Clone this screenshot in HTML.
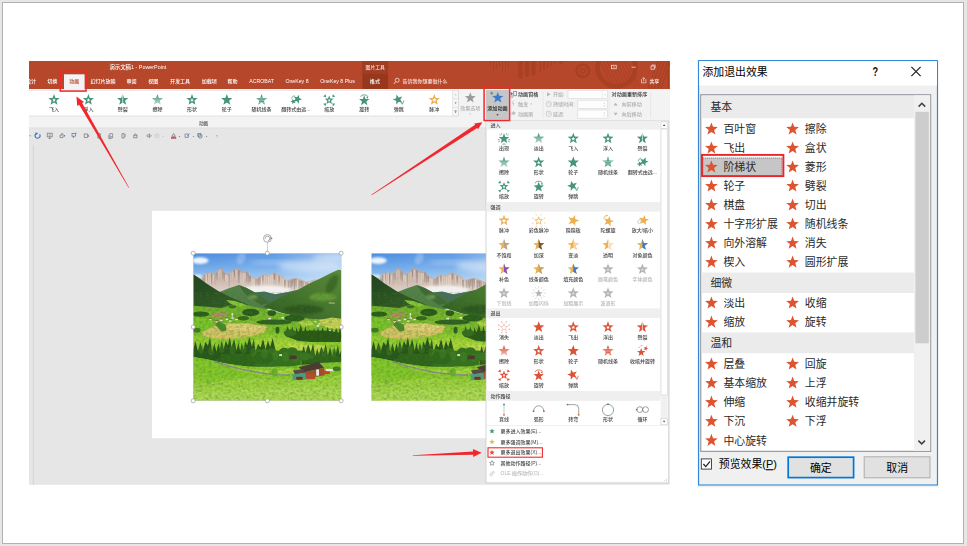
<!DOCTYPE html>
<html lang="zh-CN">
<head>
<meta charset="utf-8">
<title>添加退出效果</title>
<style>
html,body{margin:0;padding:0;background:#e6e6e6;}
body{width:967px;height:546px;overflow:hidden;font-family:"Liberation Sans","Noto Sans CJK SC",sans-serif;}
svg{display:block;}
</style>
</head>
<body>
<svg width="967" height="546" viewBox="0 0 967 546" font-family='"Liberation Sans","Noto Sans CJK SC",sans-serif'>
<defs>
<clipPath id="cwin"><rect x="29.0" y="61.0" width="640.6" height="423.8"/></clipPath>
<clipPath id="cph"><rect x="12" y="12" width="520" height="518"/></clipPath>
<linearGradient id="gsky" x1="0" y1="0" x2="0" y2="1"><stop offset="0" stop-color="#4a8ce0"/><stop offset="0.25" stop-color="#6ea8e8"/><stop offset="0.5" stop-color="#a2caf0"/><stop offset="0.75" stop-color="#cbe0f4"/><stop offset="1" stop-color="#e0ebf3"/></linearGradient>
<linearGradient id="gskyr" x1="0" y1="0" x2="1" y2="0"><stop offset="0" stop-color="#fff" stop-opacity="0"/><stop offset="0.55" stop-color="#fff" stop-opacity="0.12"/><stop offset="1" stop-color="#fff" stop-opacity="0.5"/></linearGradient>
<linearGradient id="gfore" x1="0" y1="0" x2="0" y2="1"><stop offset="0" stop-color="#79c226"/><stop offset="0.5" stop-color="#8fcb30"/><stop offset="1" stop-color="#a9d64a"/></linearGradient>
<linearGradient id="gmid" x1="0" y1="0" x2="0" y2="1"><stop offset="0" stop-color="#6fae2c"/><stop offset="0.5" stop-color="#86c62e"/><stop offset="1" stop-color="#9ad032"/></linearGradient>
<linearGradient id="glh" x1="0" y1="0" x2="1" y2="1"><stop offset="0" stop-color="#23461e"/><stop offset="1" stop-color="#355f2a"/></linearGradient>
<linearGradient id="grh" x1="1" y1="0" x2="0" y2="1"><stop offset="0" stop-color="#5a8a3a"/><stop offset="0.5" stop-color="#45752e"/><stop offset="1" stop-color="#2e5822"/></linearGradient>
<linearGradient id="grock" x1="0" y1="0" x2="0" y2="1"><stop offset="0" stop-color="#b49e95"/><stop offset="0.5" stop-color="#cfbcb0"/><stop offset="0.8" stop-color="#ddd0ca"/><stop offset="1" stop-color="#ebe6e4"/></linearGradient>
<filter id="b1" x="-20%" y="-20%" width="140%" height="140%"><feGaussianBlur stdDeviation="1.2"/></filter>
<filter id="b3" x="-30%" y="-30%" width="160%" height="160%"><feGaussianBlur stdDeviation="4"/></filter>
<filter id="b8" x="-30%" y="-30%" width="160%" height="160%"><feGaussianBlur stdDeviation="9"/></filter>
<filter id="soft" x="-2%" y="-2%" width="104%" height="104%"><feGaussianBlur stdDeviation="0.32"/></filter>
<linearGradient id="gfade" x1="0" y1="0" x2="0" y2="1"><stop offset="0" stop-color="#45957b"/><stop offset="1" stop-color="#45957b" stop-opacity="0.35"/></linearGradient>
<linearGradient id="gfadeR" x1="0" y1="0" x2="0" y2="1"><stop offset="0" stop-color="#db5237"/><stop offset="1" stop-color="#db5237" stop-opacity="0.35"/></linearGradient>
<filter id="noise" x="0" y="0" width="100%" height="100%"><feTurbulence type="fractalNoise" baseFrequency="0.09 0.12" numOctaves="3" seed="4"/><feColorMatrix type="matrix" values="0 0 0 0 0.05  0 0 0 0 0.18  0 0 0 0 0.02  1.6 0 0 0 -0.62"/></filter>
<filter id="winblur" x="0" y="0" width="100%" height="100%" filterUnits="userSpaceOnUse" primitiveUnits="userSpaceOnUse"><feGaussianBlur stdDeviation="0.3"/></filter>
</defs>
<rect x="0.00" y="0.00" width="967.00" height="546.00" fill="#e6e6e6" />
<rect x="2.5" y="2.5" width="961" height="541" fill="#ffffff" stroke="#b2b2b2" stroke-width="1"/>
<g clip-path="url(#cwin)"><g filter="url(#winblur)" font-weight="500">
<rect x="29.00" y="61.00" width="640.60" height="423.80" fill="#e6e6e6" />
<rect x="29.00" y="61.00" width="640.60" height="28.00" fill="#b7472a" />
<g fill="none" stroke="#a63f24" opacity="0.85">
<line x1="490.5" y1="61" x2="490.5" y2="66" stroke-width="1.1"/>
<line x1="493.5" y1="61" x2="493.5" y2="71" stroke-width="1.1"/>
<line x1="496.5" y1="61" x2="496.5" y2="69" stroke-width="1.1"/>
<line x1="499.5" y1="61" x2="499.5" y2="67" stroke-width="1.1"/>
<line x1="502.5" y1="61" x2="502.5" y2="72" stroke-width="1.1"/>
<line x1="505.5" y1="61" x2="505.5" y2="70" stroke-width="1.1"/>
<line x1="508.5" y1="61" x2="508.5" y2="68" stroke-width="1.1"/>
<line x1="520.5" y1="58" x2="520.5" y2="76.5" stroke-width="4.4" stroke-linecap="round"/>
<line x1="527" y1="58" x2="527" y2="75.0" stroke-width="4.4" stroke-linecap="round"/>
<line x1="533.5" y1="58" x2="533.5" y2="73.5" stroke-width="4.4" stroke-linecap="round"/>
<line x1="540.5" y1="61" x2="540.5" y2="72" stroke-width="1.6"/>
<line x1="544" y1="61" x2="544" y2="70" stroke-width="1.6"/>
<line x1="547.5" y1="61" x2="547.5" y2="68" stroke-width="1.6"/>
<line x1="551" y1="61" x2="551" y2="66" stroke-width="1.6"/>
<line x1="554.5" y1="61" x2="554.5" y2="64" stroke-width="1.6"/>
<circle cx="561" cy="62" r="2.2" fill="#a63f24" stroke="none"/>
<circle cx="582.8" cy="70.8" r="6.2" stroke-width="2.6"/>
<circle cx="582.8" cy="70.8" r="2.2" stroke-width="1.3"/>
<circle cx="616.5" cy="67.5" r="19" stroke-width="4.5"/>
<line x1="600.0" y1="61" x2="612.0" y2="86" stroke-width="1.0" opacity="0.7"/>
<line x1="603.4" y1="61" x2="615.4" y2="86" stroke-width="1.0" opacity="0.7"/>
<line x1="606.8" y1="61" x2="618.8" y2="86" stroke-width="1.0" opacity="0.7"/>
<line x1="610.2" y1="61" x2="622.2" y2="86" stroke-width="1.0" opacity="0.7"/>
<line x1="613.6" y1="61" x2="625.6" y2="86" stroke-width="1.0" opacity="0.7"/>
<line x1="617.0" y1="61" x2="629.0" y2="86" stroke-width="1.0" opacity="0.7"/>
<line x1="620.4" y1="61" x2="632.4" y2="86" stroke-width="1.0" opacity="0.7"/>
<line x1="623.8" y1="61" x2="635.8" y2="86" stroke-width="1.0" opacity="0.7"/>
<line x1="627.2" y1="61" x2="639.2" y2="86" stroke-width="1.0" opacity="0.7"/>
<line x1="658.0" y1="61" x2="648.0" y2="89" stroke-width="1.2"/>
<line x1="661.2" y1="61" x2="651.2" y2="89" stroke-width="1.2"/>
<line x1="664.4" y1="61" x2="654.4" y2="89" stroke-width="1.2"/>
<line x1="667.6" y1="61" x2="657.6" y2="89" stroke-width="1.2"/>
<line x1="670.8" y1="61" x2="660.8" y2="89" stroke-width="1.2"/>
</g>
<rect x="667.60" y="61.00" width="2.00" height="28.00" fill="#a8401f" />
<rect x="362.30" y="61.00" width="25.80" height="28.00" fill="#97391f" />
<rect x="362.30" y="61.00" width="25.80" height="13.00" fill="#a03c22" />
<text x="375.20" y="68.80" font-size="4.8" fill="#f3ddd6" text-anchor="middle" >图片工具</text>
<text x="137.90" y="69.30" font-size="5.4" fill="#fff" text-anchor="middle" >演示文稿1  -  PowerPoint</text>
<g stroke="#fff" stroke-width="0.6" fill="none">
<rect x="611.6" y="65.2" width="4.6" height="3.6"/><line x1="613" y1="67" x2="614.8" y2="67"/>
<line x1="631.5" y1="67.2" x2="635.8" y2="67.2"/>
<rect x="651" y="66" width="3.2" height="3.2"/><path d="M652,66 v-1 h3.2 v3.2 h-1"/>
<path d="M641.5,79.2 v3.6 h4.4 v-3.6 M643.7,81.4 v-3.6 M642.6,78.8 l1.1,-1.2 l1.1,1.2"/>
</g>
<text x="649.40" y="82.90" font-size="4.9" fill="#fff" text-anchor="start" >共享</text>
<rect x="64.00" y="74.30" width="20.60" height="14.90" fill="#f3f3f3" />
<text x="31.00" y="82.80" font-size="5.05" fill="#fff" text-anchor="middle" >设计</text>
<text x="52.30" y="82.80" font-size="5.05" fill="#fff" text-anchor="middle" >切换</text>
<text x="103.00" y="82.80" font-size="5.05" fill="#fff" text-anchor="middle" >幻灯片放映</text>
<text x="131.50" y="82.80" font-size="5.05" fill="#fff" text-anchor="middle" >审阅</text>
<text x="153.30" y="82.80" font-size="5.05" fill="#fff" text-anchor="middle" >视图</text>
<text x="180.00" y="82.80" font-size="5.05" fill="#fff" text-anchor="middle" >开发工具</text>
<text x="209.20" y="82.80" font-size="5.05" fill="#fff" text-anchor="middle" >加载项</text>
<text x="232.60" y="82.80" font-size="5.05" fill="#fff" text-anchor="middle" >帮助</text>
<text x="261.60" y="82.80" font-size="5.2" fill="#fff" text-anchor="middle" >ACROBAT</text>
<text x="297.00" y="82.80" font-size="5.2" fill="#fff" text-anchor="middle" >OneKey 8</text>
<text x="337.50" y="82.80" font-size="5.2" fill="#fff" text-anchor="middle" >OneKey 8 Plus</text>
<text x="374.90" y="82.80" font-size="5.05" fill="#fff" text-anchor="middle" >格式</text>
<text x="74.20" y="83.00" font-size="5.05" fill="#b7472a" text-anchor="middle" >动画</text>
<circle cx="397.2" cy="80.2" r="2.0" fill="none" stroke="#fff" stroke-width="0.65"/><line x1="395.7" y1="81.8" x2="393.7" y2="84.0" stroke="#fff" stroke-width="0.75"/>
<text x="402.40" y="82.90" font-size="5.0" fill="#f6dcd4" text-anchor="start" >告诉我你想要做什么</text>
<rect x="29.00" y="89.00" width="640.60" height="39.00" fill="#f3f3f3" />
<rect x="29.00" y="127.60" width="640.60" height="0.60" fill="#d6d6d6" />
<rect x="26" y="90.2" width="432.3" height="25.8" fill="#ffffff" stroke="#d2d2d2" stroke-width="0.6"/>
<rect x="452.8" y="90.2" width="5.5" height="25.8" fill="#f6f6f6" stroke="#d2d2d2" stroke-width="0.5"/>
<line x1="452.8" y1="98.8" x2="458.3" y2="98.8" stroke="#d2d2d2" stroke-width="0.5"/><line x1="452.8" y1="107.4" x2="458.3" y2="107.4" stroke="#d2d2d2" stroke-width="0.5"/>
<polygon points="454.6,95.2 456.6,95.2 455.6,93.9" fill="#b8b8b8"/><polygon points="454.6,102.4 456.6,102.4 455.6,103.7" fill="#555"/><polygon points="454.6,111.6 456.6,111.6 455.6,112.9" fill="#555"/><line x1="454.5" y1="110.6" x2="456.7" y2="110.6" stroke="#555" stroke-width="0.5"/>
<polygon points="54.00,94.00 55.46,97.90 59.61,98.08 56.36,100.67 57.47,104.67 54.00,102.38 50.53,104.67 51.64,100.67 48.39,98.08 52.54,97.90" fill="#45957b" /><polygon points="54.00,98.09 54.50,99.42 55.91,99.48 54.80,100.36 55.18,101.72 54.00,100.94 52.82,101.72 53.20,100.36 52.09,99.48 53.50,99.42" fill="#fff" />
<text x="54.00" y="111.40" font-size="5.0" fill="#444" text-anchor="middle" >飞入</text>
<polygon points="88.40,94.00 89.86,97.90 94.01,98.08 90.76,100.67 91.87,104.67 88.40,102.38 84.93,104.67 86.04,100.67 82.79,98.08 86.94,97.90" fill="#45957b" /><polygon points="88.40,98.09 88.90,99.42 90.31,99.48 89.20,100.36 89.58,101.72 88.40,100.94 87.22,101.72 87.60,100.36 86.49,99.48 87.90,99.42" fill="#fff" />
<text x="88.40" y="111.40" font-size="5.0" fill="#444" text-anchor="middle" >浮入</text>
<polygon points="122.70,94.00 124.16,97.90 128.31,98.08 125.06,100.67 126.17,104.67 122.70,102.38 119.23,104.67 120.34,100.67 117.09,98.08 121.24,97.90" fill="#45957b" /><line x1="122.70" y1="94.00" x2="122.70" y2="105.80" stroke="#fff" stroke-width="0.7"/>
<text x="122.70" y="111.40" font-size="5.0" fill="#444" text-anchor="middle" >劈裂</text>
<polygon points="157.40,94.00 158.86,97.90 163.01,98.08 159.76,100.67 160.87,104.67 157.40,102.38 153.93,104.67 155.04,100.67 151.79,98.08 155.94,97.90" fill="url(#gfade)" />
<text x="157.40" y="111.40" font-size="5.0" fill="#444" text-anchor="middle" >擦除</text>
<polygon points="192.00,94.00 193.46,97.90 197.61,98.08 194.36,100.67 195.47,104.67 192.00,102.38 188.53,104.67 189.64,100.67 186.39,98.08 190.54,97.90" fill="#45957b" /><polygon points="192.00,98.09 192.50,99.42 193.91,99.48 192.80,100.36 193.18,101.72 192.00,100.94 190.82,101.72 191.20,100.36 190.09,99.48 191.50,99.42" fill="#fff" />
<text x="192.00" y="111.40" font-size="5.0" fill="#444" text-anchor="middle" >形状</text>
<polygon points="226.80,94.00 228.26,97.90 232.41,98.08 229.16,100.67 230.27,104.67 226.80,102.38 223.33,104.67 224.44,100.67 221.19,98.08 225.34,97.90" fill="#45957b" />
<text x="226.80" y="111.40" font-size="5.0" fill="#444" text-anchor="middle" >轮子</text>
<polygon points="261.60,94.00 263.06,97.90 267.21,98.08 263.96,100.67 265.07,104.67 261.60,102.38 258.13,104.67 259.24,100.67 255.99,98.08 260.14,97.90" fill="#45957b" /><line x1="255.70" y1="97.30" x2="267.50" y2="97.30" stroke="#fff" stroke-width="0.45"/><line x1="255.70" y1="99.00" x2="267.50" y2="99.00" stroke="#fff" stroke-width="0.45"/><line x1="255.70" y1="100.70" x2="267.50" y2="100.70" stroke="#fff" stroke-width="0.45"/><line x1="255.70" y1="102.40" x2="267.50" y2="102.40" stroke="#fff" stroke-width="0.45"/><line x1="255.70" y1="104.10" x2="267.50" y2="104.10" stroke="#fff" stroke-width="0.45"/>
<text x="261.60" y="111.40" font-size="5.0" fill="#444" text-anchor="middle" >随机线条</text>
<polygon points="299.12,94.67 299.14,97.99 302.22,99.27 299.06,100.32 298.80,103.64 296.82,100.96 293.58,101.74 295.52,99.03 293.78,96.19 296.96,97.19" fill="#45957b" /><polygon points="292.43,98.68 293.70,100.33 295.71,99.80 294.54,101.52 295.66,103.27 293.67,102.68 292.35,104.29 292.29,102.21 290.35,101.46 292.31,100.76" fill="#45957b" /><path d="M291.60,98.70 q0.4,-2.6 3,-3.2" stroke="#45957b" stroke-width="0.7" fill="none"/>
<text x="295.90" y="111.40" font-size="5.0" fill="#444" text-anchor="middle" >翻转式由远...</text>
<polygon points="329.20,95.48 330.37,98.60 333.69,98.74 331.09,100.81 331.97,104.02 329.20,102.18 326.43,104.02 327.31,100.81 324.71,98.74 328.03,98.60" fill="#45957b" /><polygon points="329.20,98.65 329.61,99.74 330.77,99.79 329.86,100.51 330.17,101.64 329.20,100.99 328.23,101.64 328.54,100.51 327.63,99.79 328.79,99.74" fill="#fff" /><polygon points="326.13,97.13 323.18,96.54 325.54,94.18" fill="#45957b"/><polygon points="326.13,103.27 323.18,103.86 325.54,106.22" fill="#45957b"/><polygon points="332.27,97.13 335.22,96.54 332.86,94.18" fill="#45957b"/><polygon points="332.27,103.27 335.22,103.86 332.86,106.22" fill="#45957b"/>
<text x="329.20" y="111.40" font-size="5.0" fill="#444" text-anchor="middle" >缩放</text>
<polygon points="364.20,95.37 365.54,98.96 369.36,99.12 366.37,101.50 367.39,105.19 364.20,103.08 361.01,105.19 362.03,101.50 359.04,99.12 362.86,98.96" fill="#45957b" /><path d="M361.00,96.90 a3.4,1.6 0 1 1 6.2,0.4" stroke="#45957b" stroke-width="0.8" fill="none"/><polygon points="368.00,96.50 366.20,97.70 368.10,98.50" fill="#45957b"/>
<text x="364.20" y="111.40" font-size="5.0" fill="#444" text-anchor="middle" >旋转</text>
<polygon points="396.43,94.43 398.72,97.39 402.34,96.44 400.23,99.53 402.25,102.68 398.66,101.63 396.29,104.53 396.18,100.79 392.69,99.42 396.21,98.16" fill="#45957b" /><path d="M401.00,102.10 l1.3,2.2 l1.6,-3.6" stroke="#45957b" stroke-width="0.8" fill="none"/>
<text x="398.80" y="111.40" font-size="5.0" fill="#444" text-anchor="middle" >弹跳</text>
<polygon points="434.30,94.00 435.76,97.90 439.91,98.08 436.66,100.67 437.77,104.67 434.30,102.38 430.83,104.67 431.94,100.67 428.69,98.08 432.84,97.90" fill="#ecb050" /><polygon points="434.30,97.74 434.88,99.30 436.54,99.37 435.24,100.41 435.69,102.01 434.30,101.09 432.91,102.01 433.36,100.41 432.06,99.37 433.72,99.30" fill="#fff" />
<text x="434.30" y="111.40" font-size="5.0" fill="#444" text-anchor="middle" >脉冲</text>
<text x="203.60" y="125.00" font-size="4.7" fill="#555" text-anchor="middle" >动画</text>
<polygon points="470.30,92.20 471.71,95.96 475.72,96.14 472.58,98.64 473.65,102.51 470.30,100.29 466.95,102.51 468.02,98.64 464.88,96.14 468.89,95.96" fill="#9b9b9b" />
<text x="470.30" y="110.30" font-size="5.0" fill="#b0b0b0" text-anchor="middle" >效果选项</text>
<polygon points="469.4,113.6 471.2,113.6 470.3,114.7" fill="#b8b8b8"/>
<rect x="486.00" y="90.00" width="22.80" height="29.60" fill="#c6c6c6" />
<polygon points="497.80,91.90 499.26,95.80 503.41,95.98 500.16,98.57 501.27,102.57 497.80,100.28 494.33,102.57 495.44,98.57 492.19,95.98 496.34,95.80" fill="#3c7ccc" />
<path d="M490.2,93.2 h3 M491.7,91.7 v3" stroke="#3f9076" stroke-width="0.9"/>
<text x="497.40" y="110.30" font-size="5.1" fill="#222" text-anchor="middle" >添加动画</text>
<polygon points="496.3,114.2 498.7,114.2 497.5,115.7" fill="#333"/>
<path d="M510.6,91.8 l2.6,1.9 l-2.6,1.9 z" fill="#3c7ccc"/><rect x="513.8" y="91.6" width="2.8" height="4.2" fill="none" stroke="#555" stroke-width="0.55"/><circle cx="512" cy="96.6" r="1" fill="none" stroke="#3c7ccc" stroke-width="0.5"/>
<text x="518.00" y="96.00" font-size="5.1" fill="#333" text-anchor="start" >动画窗格</text>
<path d="M513.6,100.6 l-1.4,2.8 h1.8 l-1.2,2.8" stroke="#c0c0c0" stroke-width="0.7" fill="none"/>
<text x="518.00" y="105.80" font-size="5.1" fill="#b0b0b0" text-anchor="start" >触发</text>
<polygon points="530.2,103.6 532.2,103.6 531.2,104.9" fill="#b8b8b8"/>
<polygon points="513.60,110.60 514.24,112.32 516.07,112.40 514.64,113.54 515.13,115.30 513.60,114.29 512.07,115.30 512.56,113.54 511.13,112.40 512.96,112.32" fill="#b8b8b8" />
<line x1="510.2" y1="114.6" x2="512.4" y2="113.6" stroke="#b8b8b8" stroke-width="0.7"/>
<text x="518.00" y="115.70" font-size="5.1" fill="#b0b0b0" text-anchor="start" >动画刷</text>
<line x1="543.2" y1="91.5" x2="543.2" y2="118.4" stroke="#dcdcdc" stroke-width="0.5"/>
<polygon points="547,92.2 547,96.4 550.6,94.3" fill="#b8b8b8"/>
<text x="553.00" y="96.00" font-size="5.1" fill="#b0b0b0" text-anchor="start" >开始:</text>
<rect x="568.0" y="90.3" width="39.6" height="8.4" fill="#fdfdfd" stroke="#d4d4d4" stroke-width="0.55"/><line x1="602.4" y1="90.3" x2="602.4" y2="98.7" stroke="#dddddd" stroke-width="0.45"/><polygon points="604.2,94 605.8,94 605,95" fill="#c4c4c4"/>
<circle cx="548.8" cy="104" r="2.7" fill="none" stroke="#b8b8b8" stroke-width="0.6"/><path d="M548.8,102.3 v1.8 h1.4" stroke="#b8b8b8" stroke-width="0.5" fill="none"/>
<text x="553.00" y="105.80" font-size="5.1" fill="#b0b0b0" text-anchor="start" >持续时间:</text>
<rect x="577.8" y="100.2" width="29.8" height="8.2" fill="#fdfdfd" stroke="#d4d4d4" stroke-width="0.55"/>
<circle cx="548.8" cy="113.9" r="2.7" fill="none" stroke="#b8b8b8" stroke-width="0.6"/><path d="M548.8,112.2 v1.8 h1.4 M546.4,111.4 l1,-0.8" stroke="#b8b8b8" stroke-width="0.5" fill="none"/>
<text x="553.00" y="115.70" font-size="5.1" fill="#b0b0b0" text-anchor="start" >延迟:</text>
<rect x="577.8" y="110.0" width="29.8" height="8.2" fill="#fdfdfd" stroke="#d4d4d4" stroke-width="0.55"/>
<polygon points="603.4,103.60000000000001 605.2,103.60000000000001 604.3,102.5" fill="#c4c4c4"/><polygon points="603.4,105.60000000000001 605.2,105.60000000000001 604.3,106.7" fill="#c4c4c4"/>
<polygon points="603.4,113.4 605.2,113.4 604.3,112.3" fill="#c4c4c4"/><polygon points="603.4,115.4 605.2,115.4 604.3,116.5" fill="#c4c4c4"/>
<line x1="609.2" y1="91.5" x2="609.2" y2="118.4" stroke="#dcdcdc" stroke-width="0.5"/>
<text x="611.60" y="96.00" font-size="5.1" fill="#333" text-anchor="start" >对动画重新排序</text>
<polygon points="613.6,105.4 617.6,105.4 615.6,102.8" fill="#b4b4b4"/>
<text x="621.40" y="105.80" font-size="5.1" fill="#b0b0b0" text-anchor="start" >向前移动</text>
<polygon points="613.6,112.8 617.6,112.8 615.6,115.4" fill="#b4b4b4"/>
<text x="621.40" y="115.70" font-size="5.1" fill="#b0b0b0" text-anchor="start" >向后移动</text>
<line x1="650.6" y1="91.5" x2="650.6" y2="118.4" stroke="#dcdcdc" stroke-width="0.5"/>
<polygon points="29.2,135.4 31,135.4 30.1,136.5" fill="#666"/><path d="M39.6,134.20000000000002 a2.5,2.5 0 1 1 -3.6,-0.5" fill="none" stroke="#3b78c6" stroke-width="1.1"/><polygon points="35.2,132.60000000000002 38.2,133.10000000000002 36.2,134.9" fill="#3b78c6"/><rect x="47.2" y="133.20000000000002" width="5" height="3.6" fill="none" stroke="#7a7a7a" stroke-width="0.75"/><path d="M48.4,138.4 h2.6 M49.7,136.8 v1.6" stroke="#7a7a7a" stroke-width="0.75"/><circle cx="49.7" cy="135.0" r="0.9" fill="none" stroke="#7a7a7a" stroke-width="0.4"/><path d="M60,137.60000000000002 v-2.4 h1.4 v-1.4 h1.6 v3.8 z" fill="none" stroke="#7a7a7a" stroke-width="0.75"/><path d="M63.8,135.8 h1.4 M64.5,135.10000000000002 v1.4" stroke="#3b78c6" stroke-width="0.75"/><rect x="72" y="133.60000000000002" width="3.6" height="2.6" fill="none" stroke="#7a7a7a" stroke-width="0.75"/><path d="M75,133.60000000000002 l1.6,-0.6 M73.4,136.20000000000002 v1.8" stroke="#3b78c6" stroke-width="0.8"/><rect x="84.2" y="134.0" width="3.4" height="3.6" fill="none" stroke="#7a7a7a" stroke-width="0.75"/><path d="M88.6,134.60000000000002 v2.4" stroke="#7a7a7a" stroke-width="0.75"/><path d="M97.8,133.60000000000002 h2.6 v4.6 h-2.6 z" fill="none" stroke="#7a7a7a" stroke-width="0.75"/><path d="M98.6,136.60000000000002 h1" stroke="#3b78c6" stroke-width="0.8"/><path d="M109.8,133.60000000000002 h2.8 v4.4 h-2.8 z M108.8,134.8 v3.8 h2.4" fill="none" stroke="#7a7a7a" stroke-width="0.7"/><path d="M110.6,136.60000000000002 h1.2" stroke="#3b78c6" stroke-width="0.8"/><path d="M122,133.60000000000002 h2.2 v4.4 h-2.2 z" fill="none" stroke="#7a7a7a" stroke-width="0.75"/><path d="M124.8,134.8 h1 M124.8,136.20000000000002 h1" stroke="#3b78c6" stroke-width="0.75"/><rect x="133.8" y="135.20000000000002" width="3.2" height="2.6" fill="none" stroke="#7a7a7a" stroke-width="0.75"/><path d="M134.4,135.20000000000002 a1,1.3 0 0 1 2,0" fill="none" stroke="#7a7a7a" stroke-width="0.7"/><path d="M147.2,135.0 h1 l1.3,-1.2 v4 l-1.3,-1.2 h-1 z" fill="none" stroke="#7a7a7a" stroke-width="0.7"/><path d="M150.6,134.8 a1.4,1.4 0 0 1 0,2" fill="none" stroke="#7a7a7a" stroke-width="0.8"/><circle cx="157" cy="135.8" r="2.1" fill="none" stroke="#c6c6c6" stroke-width="0.75"/><path d="M157,134.60000000000002 v1.3 h1" stroke="#c6c6c6" stroke-width="0.6" fill="none"/><polygon points="162.4,136.0 164,136.0 163.2,136.9" fill="#bbb"/><path d="M171.8,136.4 l1.8,-3 l1.8,3 z" fill="none" stroke="#7a7a7a" stroke-width="0.75"/><rect x="171" y="137.3" width="5.2" height="1.3" fill="#c0202a"/><polygon points="178.8,136.0 180.4,136.0 179.6,136.9" fill="#666"/><path d="M185,134.0 h3.4 v3.4 h-3.4 z" fill="none" stroke="#7a7a7a" stroke-width="0.7"/><path d="M187,136.4 l2.6,-3" stroke="#3b78c6" stroke-width="0.7"/><polygon points="192.6,136.0 194.2,136.0 193.4,136.9" fill="#666"/><circle cx="200.2" cy="136.20000000000002" r="1.9" fill="none" stroke="#3b78c6" stroke-width="0.75"/><rect x="197.8" y="133.60000000000002" width="3" height="2.6" fill="none" stroke="#7a7a7a" stroke-width="0.7"/><polygon points="205.8,136.0 207.4,136.0 206.6,136.9" fill="#666"/><path d="M216.6,135.20000000000002 l0.9,0.9 l-0.9,0.9" fill="none" stroke="#888" stroke-width="0.8"/>
<line x1="33.2" y1="145" x2="33.2" y2="485" stroke="#d4d4d4" stroke-width="1"/>
<rect x="152.00" y="210.80" width="488.00" height="227.40" fill="#ffffff" />
<g transform="translate(193.2,253.2) scale(0.28462,0.28494) translate(-12,-12)" clip-path="url(#cph)" filter="url(#soft)">
<rect x="12" y="12" width="520" height="200" fill="url(#gsky)"/>
<rect x="12" y="12" width="520" height="200" fill="url(#gskyr)"/>
<ellipse cx="36" cy="38" rx="30" ry="12" fill="#fff" opacity="0.9" filter="url(#b3)"/>
<ellipse cx="420" cy="58" rx="110" ry="20" fill="#fff" opacity="0.4" filter="url(#b8)"/>
<ellipse cx="290" cy="44" rx="80" ry="7" fill="#fff" opacity="0.28" filter="url(#b8)"/>
<ellipse cx="490" cy="28" rx="60" ry="14" fill="#fff" opacity="0.35" filter="url(#b8)"/>
<ellipse cx="180" cy="30" rx="14" ry="22" fill="#fff" opacity="0.22" filter="url(#b3)" transform="rotate(25 180 30)"/>
<polygon points="395,118 420,110 440,104 462,108 490,100 532,96 532,150 395,150" fill="#a7b4c4" opacity="0.85"/>
<polygon points="40,108 48,88 54,80 62,84 71,74 80,84 91,80 99,70 108,63 115,70 122,77 130,86 136,86 143,78 150,73 157,68 164,63 171,68 178,71 184,78 190,80 196,76 201,74 208,84 218,94 226,98 235,100 244,94 252,90 263,85 270,90 277,91 285,82 292,82 299,79 306,84 313,88 320,90 325,91 332,100 339,105 348,104 356,102 366,100 375,99 385,102 395,105 409,111 425,110 440,105 452,110 452,165 40,165" fill="url(#grock)" />
<polygon points="44.0,99.9 48.3,102.2 47.4,145.9 44.9,141.3" fill="#7f6c68" opacity="0.45"/>
<polygon points="48.8,89.0 53.3,89.4 52.4,131.7 49.7,127.4" fill="#7f6c68" opacity="0.39"/>
<polygon points="55.3,83.9 60.6,86.4 59.6,131.5 56.4,126.7" fill="#f0e2d4" opacity="0.50"/>
<polygon points="61.0,85.3 63.6,85.4 63.1,108.9 61.5,106.5" fill="#7f6c68" opacity="0.37"/>
<polygon points="64.7,83.6 69.0,86.2 68.1,119.1 65.6,115.5" fill="#f0e2d4" opacity="0.45"/>
<polygon points="70.1,80.0 73.7,81.3 73.0,127.9 70.9,123.1" fill="#f0e2d4" opacity="0.51"/>
<polygon points="74.3,82.4 78.0,84.0 77.2,124.4 75.1,120.2" fill="#7f6c68" opacity="0.55"/>
<polygon points="80.4,84.4 86.3,88.3 85.1,111.8 81.6,109.1" fill="#f0e2d4" opacity="0.44"/>
<polygon points="87.3,83.4 90.0,84.8 89.5,125.7 87.8,121.5" fill="#7f6c68" opacity="0.33"/>
<polygon points="92.5,79.0 98.0,82.2 96.9,107.4 93.6,104.5" fill="#7f6c68" opacity="0.32"/>
<polygon points="98.4,72.3 103.2,74.9 102.2,99.3 99.4,96.6" fill="#f0e2d4" opacity="0.34"/>
<polygon points="103.5,67.6 107.6,68.8 106.8,96.6 104.3,93.7" fill="#f0e2d4" opacity="0.54"/>
<polygon points="109.9,69.7 113.2,73.6 112.5,113.9 110.5,109.5" fill="#f0e2d4" opacity="0.33"/>
<polygon points="113.7,74.7 117.3,75.1 116.6,105.3 114.4,102.2" fill="#7f6c68" opacity="0.32"/>
<polygon points="118.7,79.2 122.2,81.2 121.5,110.9 119.4,107.7" fill="#7f6c68" opacity="0.59"/>
<polygon points="123.6,86.5 129.6,87.5 128.4,112.5 124.8,109.9" fill="#f0e2d4" opacity="0.55"/>
<polygon points="130.1,88.9 135.5,91.3 134.4,116.0 131.2,113.3" fill="#f0e2d4" opacity="0.56"/>
<polygon points="136.6,85.9 139.5,87.0 138.9,133.0 137.2,128.3" fill="#7f6c68" opacity="0.51"/>
<polygon points="141.6,80.9 146.4,81.8 145.5,107.4 142.5,104.8" fill="#f0e2d4" opacity="0.32"/>
<polygon points="147.8,76.6 153.8,76.6 152.6,105.9 149.0,102.9" fill="#f0e2d4" opacity="0.36"/>
<polygon points="154.4,70.5 158.7,71.0 157.9,97.1 155.3,94.4" fill="#7f6c68" opacity="0.47"/>
<polygon points="159.6,69.1 165.7,69.6 164.5,108.2 160.8,104.3" fill="#f0e2d4" opacity="0.48"/>
<polygon points="165.8,68.9 168.3,71.4 167.8,109.1 166.3,105.1" fill="#f0e2d4" opacity="0.31"/>
<polygon points="169.5,71.0 175.0,73.9 173.9,119.0 170.6,114.2" fill="#7f6c68" opacity="0.46"/>
<polygon points="177.2,78.7 182.7,81.4 181.6,121.3 178.3,117.1" fill="#f0e2d4" opacity="0.41"/>
<polygon points="184.9,80.9 190.9,83.4 189.7,123.5 186.1,119.2" fill="#f0e2d4" opacity="0.47"/>
<polygon points="191.9,80.8 196.7,84.3 195.7,104.9 192.8,102.5" fill="#f0e2d4" opacity="0.60"/>
<polygon points="198.5,78.6 202.6,78.9 201.8,115.7 199.3,112.0" fill="#7f6c68" opacity="0.55"/>
<polygon points="204.4,84.7 207.1,86.6 206.5,119.2 205.0,115.7" fill="#7f6c68" opacity="0.51"/>
<polygon points="208.6,91.9 214.8,92.7 213.5,114.2 209.8,112.0" fill="#7f6c68" opacity="0.50"/>
<polygon points="215.2,97.8 221.3,100.5 220.1,131.3 216.4,128.0" fill="#f0e2d4" opacity="0.40"/>
<polygon points="221.8,100.5 226.0,102.9 225.2,146.3 222.7,141.7" fill="#f0e2d4" opacity="0.42"/>
<polygon points="226.8,100.6 229.9,104.4 229.3,144.4 227.4,140.0" fill="#f0e2d4" opacity="0.51"/>
<polygon points="230.6,101.3 233.7,103.9 233.1,130.5 231.2,127.6" fill="#7f6c68" opacity="0.42"/>
<polygon points="235.0,102.6 238.7,102.7 238.0,150.1 235.7,145.4" fill="#7f6c68" opacity="0.32"/>
<polygon points="240.9,98.3 243.6,98.4 243.1,135.2 241.5,131.5" fill="#7f6c68" opacity="0.54"/>
<polygon points="243.9,94.6 248.2,94.8 247.4,138.2 244.8,133.8" fill="#7f6c68" opacity="0.34"/>
<polygon points="249.8,93.2 254.1,95.9 253.3,132.2 250.7,128.3" fill="#f0e2d4" opacity="0.59"/>
<polygon points="254.6,89.8 259.0,90.5 258.1,112.0 255.5,109.8" fill="#7f6c68" opacity="0.51"/>
<polygon points="259.7,88.7 263.6,90.3 262.8,124.3 260.5,120.7" fill="#f0e2d4" opacity="0.53"/>
<polygon points="265.6,91.0 271.7,92.8 270.5,137.2 266.8,132.6" fill="#f0e2d4" opacity="0.34"/>
<polygon points="273.2,91.9 279.4,95.7 278.2,128.7 274.5,125.0" fill="#f0e2d4" opacity="0.54"/>
<polygon points="280.5,88.0 285.6,90.9 284.6,128.8 281.6,124.7" fill="#f0e2d4" opacity="0.49"/>
<polygon points="286.2,85.0 292.3,86.2 291.1,132.4 287.4,127.6" fill="#f0e2d4" opacity="0.54"/>
<polygon points="294.6,82.3 300.5,85.4 299.3,106.4 295.7,104.0" fill="#7f6c68" opacity="0.47"/>
<polygon points="301.7,85.3 304.3,86.7 303.8,109.0 302.2,106.6" fill="#f0e2d4" opacity="0.35"/>
<polygon points="306.3,86.8 309.3,89.5 308.7,122.2 306.9,118.7" fill="#f0e2d4" opacity="0.55"/>
<polygon points="311.7,91.8 316.2,92.9 315.3,116.0 312.6,113.6" fill="#7f6c68" opacity="0.46"/>
<polygon points="318.0,92.4 323.1,93.9 322.0,136.4 319.0,132.0" fill="#f0e2d4" opacity="0.39"/>
<polygon points="325.2,100.1 331.3,102.4 330.0,144.2 326.4,139.8" fill="#f0e2d4" opacity="0.46"/>
<polygon points="331.8,104.9 336.4,107.0 335.5,142.6 332.7,138.9" fill="#7f6c68" opacity="0.59"/>
<polygon points="337.4,106.4 343.1,108.6 342.0,141.2 338.6,137.7" fill="#f0e2d4" opacity="0.32"/>
<polygon points="344.2,107.2 350.5,109.0 349.2,136.2 345.4,133.3" fill="#7f6c68" opacity="0.34"/>
<polygon points="352.5,104.6 358.6,108.3 357.4,134.8 353.7,131.8" fill="#7f6c68" opacity="0.49"/>
<polygon points="358.9,102.0 364.6,103.3 363.4,129.0 360.1,126.3" fill="#7f6c68" opacity="0.51"/>
<polygon points="365.5,100.9 370.4,101.9 369.4,141.9 366.4,137.8" fill="#7f6c68" opacity="0.45"/>
<polygon points="370.9,101.0 375.5,101.7 374.6,132.8 371.8,129.6" fill="#7f6c68" opacity="0.46"/>
<polygon points="376.1,102.9 381.1,106.3 380.1,138.7 377.1,135.1" fill="#f0e2d4" opacity="0.48"/>
<polygon points="381.7,105.2 387.1,108.9 386.0,150.6 382.8,146.1" fill="#7f6c68" opacity="0.39"/>
<polygon points="387.7,107.5 394.2,108.5 392.9,133.0 389.0,130.4" fill="#7f6c68" opacity="0.52"/>
<polygon points="394.4,108.8 400.2,111.5 399.1,151.3 395.6,147.1" fill="#7f6c68" opacity="0.42"/>
<polygon points="400.3,110.9 403.6,112.9 402.9,156.6 400.9,152.0" fill="#f0e2d4" opacity="0.33"/>
<polygon points="405.5,113.2 410.0,113.3 409.1,140.1 406.4,137.4" fill="#7f6c68" opacity="0.33"/>
<polygon points="411.4,112.8 415.9,116.1 415.0,138.6 412.3,136.0" fill="#7f6c68" opacity="0.36"/>
<polygon points="418.4,111.2 424.6,114.2 423.4,134.8 419.6,132.4" fill="#f0e2d4" opacity="0.44"/>
<polygon points="425.4,111.6 429.8,114.4 428.9,144.8 426.3,141.5" fill="#f0e2d4" opacity="0.30"/>
<polygon points="431.9,109.3 435.1,110.0 434.5,150.6 432.6,146.4" fill="#7f6c68" opacity="0.36"/>
<polygon points="436.4,108.9 439.0,111.4 438.5,151.8 436.9,147.5" fill="#f0e2d4" opacity="0.56"/>
<polygon points="440.0,108.8 444.9,112.4 443.9,156.3 441.0,151.6" fill="#f0e2d4" opacity="0.38"/>
<ellipse cx="265" cy="140" rx="90" ry="15" fill="#f4f3f3" opacity="0.92" filter="url(#b3)"/>
<ellipse cx="26" cy="94" rx="18" ry="7" fill="#f2f2f2" opacity="0.85" filter="url(#b3)"/>
<polygon points="225,150 262,146 300,156 345,148 380,140 360,200 250,205" fill="#46705a" />
<polygon points="100,150 135,136 172,124 200,134 232,152 262,172 300,194 262,214 180,208 120,182" fill="#53804a" />
<polygon points="172,124 200,134 232,152 262,172 285,188 250,194 214,170 190,150" fill="#3f6b36" />
<ellipse cx="222" cy="166" rx="16" ry="8" fill="#86a868" opacity="0.7" filter="url(#b3)"/>
<polygon points="258,200 300,177 340,157 380,140 420,118 460,100 500,80 522,70 532,72 532,250 420,244 330,224" fill="url(#grh)" />
<ellipse cx="468" cy="166" rx="48" ry="15" fill="#6da23a" opacity="0.8" filter="url(#b3)"/>
<ellipse cx="400" cy="210" rx="70" ry="16" fill="#26501d" opacity="0.75" filter="url(#b3)"/>
<ellipse cx="500" cy="120" rx="16" ry="36" fill="#2c561f" opacity="0.55" filter="url(#b3)" transform="rotate(28 500 120)"/>
<rect x="488" y="184" width="22" height="6" fill="#a9b870" opacity="0.8"/>
<polygon points="12,86 30,97 60,119 100,145 140,165 175,180 208,194 150,214 12,214" fill="url(#glh)" />
<polygon points="12,196 60,200 110,204 150,192 180,186 208,196 262,208 330,224 420,242 532,248 532,440 12,440" fill="url(#gmid)" />
<polygon points="128,176 160,180 196,194 176,202 140,188" fill="#88c834" />
<ellipse cx="38" cy="226" rx="30" ry="9" fill="#2c5a1e" filter="url(#b1)"/>
<ellipse cx="214" cy="220" rx="30" ry="13" fill="#2b581d" filter="url(#b1)"/>
<ellipse cx="288" cy="222" rx="15" ry="10" fill="#2c5a1e" filter="url(#b1)"/>
<ellipse cx="296" cy="254" rx="62" ry="9" fill="#2f6020" filter="url(#b1)"/>
<ellipse cx="368" cy="240" rx="36" ry="12" fill="#2c5a1e" filter="url(#b1)"/>
<ellipse cx="188" cy="240" rx="20" ry="8" fill="#35681f" filter="url(#b1)"/>
<ellipse cx="150" cy="200" rx="14" ry="5" fill="#3a6c24" filter="url(#b1)"/>
<polygon points="76,222 126,218 134,232 84,237" fill="#b08c66" />
<rect x="68" y="242" width="9" height="6" fill="#f0ece4"/>
<rect x="67" y="239" width="11" height="3.4" fill="#8a5a3c"/>
<rect x="90" y="250" width="9" height="6" fill="#f0ece4"/>
<rect x="89" y="247" width="11" height="3.4" fill="#8a5a3c"/>
<rect x="106" y="244" width="9" height="6" fill="#f0ece4"/>
<rect x="105" y="241" width="11" height="3.4" fill="#8a5a3c"/>
<rect x="126" y="240" width="9" height="6" fill="#f0ece4"/>
<rect x="125" y="237" width="11" height="3.4" fill="#8a5a3c"/>
<rect x="146" y="236" width="9" height="6" fill="#f0ece4"/>
<rect x="145" y="233" width="11" height="3.4" fill="#8a5a3c"/>
<rect x="160" y="241" width="9" height="6" fill="#f0ece4"/>
<rect x="159" y="238" width="11" height="3.4" fill="#8a5a3c"/>
<rect x="82" y="258" width="9" height="6" fill="#f0ece4"/>
<rect x="81" y="255" width="11" height="3.4" fill="#8a5a3c"/>
<rect x="138" y="247" width="9" height="6" fill="#f0ece4"/>
<rect x="137" y="244" width="11" height="3.4" fill="#8a5a3c"/>
<rect x="147" y="222" width="4" height="14" fill="#f4f0ea"/>
<rect x="322" y="236" width="9" height="6" fill="#ece6dc"/>
<rect x="276" y="238" width="9" height="6" fill="#ece6dc"/>
<rect x="438" y="250" width="9" height="6" fill="#ece6dc"/>
<rect x="452" y="257" width="9" height="6" fill="#ece6dc"/>
<rect x="486" y="282" width="9" height="6" fill="#ece6dc"/>
<rect x="505" y="288" width="9" height="6" fill="#ece6dc"/>
<rect x="446" y="264" width="9" height="6" fill="#ece6dc"/>
<polygon points="12,238 60,242 100,262 60,286 12,292" fill="#7cc42c" />
<polygon points="38,294 80,268 120,258 200,258 276,268 258,294 200,307 120,315 60,309" fill="#d6c466" />
<polygon points="110,262 200,260 262,270 240,284 150,282" fill="#e4d27c" opacity="0.85"/>
<ellipse cx="24" cy="282" rx="14" ry="8" fill="#3f7a26"/>
<polygon points="88,262 100,252 126,262 128,284 112,288" fill="#4a8a2a" filter="url(#b1)"/>
<polygon points="455,246 500,238 532,242 532,278 490,276 460,264" fill="#cbd258" />
<polygon points="380,254 420,248 440,264 400,270" fill="#b4d048" />
<polygon points="336,324 336,296.3 344.0,266.3 352.1,298.2 360.3,268.2 368.6,301.8 374.9,271.8 381.1,293.2 390.2,263.2 399.4,296.6 406.3,266.6 413.1,306.9 420.9,276.9 428.7,304.7 436.5,274.7 444.2,301.9 450.8,271.9 457.4,301.9 466.6,271.9 475.9,300.3 484.7,270.3 493.4,302.4 499.7,272.4 505.9,303.6 514.1,273.6 522.4,297.2 528.5,267.2 532,300 532,324" fill="#295619" />
<ellipse cx="444" cy="302" rx="96" ry="19" fill="#295619" filter="url(#b1)"/>
<ellipse cx="352" cy="292" rx="22" ry="12" fill="#356a22" filter="url(#b1)"/>
<ellipse cx="308" cy="282" rx="7" ry="12" fill="#2c5c1e"/>
<polygon points="12,302 120,315 200,307 258,294 320,297 380,319 480,329 532,323 532,440 12,440" fill="#92cc30" />
<polygon points="200,321 300,307 400,327 480,335 470,357 360,367 250,353" fill="#a6d438" />
<polygon points="340,331 470,337 476,357 380,367" fill="#c4dc50" opacity="0.9"/>
<polygon points="12,410 12,350.9 20.2,320.9 28.4,355.1 37.3,325.1 46.2,353.8 55.0,323.8 63.8,336.7 71.1,306.7 78.3,358.6 86.2,328.6 94.0,357.6 100.0,327.6 106.0,347.3 112.5,317.3 119.0,349.1 126.6,319.1 134.2,336.3 140.5,306.3 146.9,342.7 155.7,312.7 164.5,354.4 170.7,324.4 176.8,355.1 182.9,325.1 189.0,350.8 195.0,320.8 201.1,336.0 209.7,306.0 218.4,341.0 224.7,311.0 231.1,359.6 239.8,329.6 248.4,342.9 257.4,312.9 266.3,348.9 274.3,318.9 282.3,340.9 291.2,310.9 300,348 300,410" fill="#27531a" />
<ellipse cx="160" cy="386" rx="150" ry="22" fill="#2f641f" filter="url(#b1)"/>
<ellipse cx="60" cy="372" rx="50" ry="18" fill="#28561b" filter="url(#b1)"/>
<polygon points="230,410 230,368 390,368 390,410" fill="#34701f" /><ellipse cx="241.9" cy="365.4" rx="17.8" ry="18.5" fill="#34701f"/><ellipse cx="265.4" cy="365.6" rx="17.4" ry="16.5" fill="#34701f"/><ellipse cx="288.6" cy="362.2" rx="17.4" ry="16.8" fill="#34701f"/><ellipse cx="309.5" cy="369.5" rx="14.0" ry="14.8" fill="#34701f"/><ellipse cx="332.1" cy="361.1" rx="19.9" ry="17.2" fill="#34701f"/><ellipse cx="359.5" cy="360.5" rx="21.3" ry="18.8" fill="#34701f"/><ellipse cx="385.9" cy="367.8" rx="18.3" ry="13.9" fill="#34701f"/>
<ellipse cx="255" cy="380" rx="40" ry="22" fill="#2f661f" filter="url(#b1)"/>
<polygon points="392,404 392,367.3 399.4,337.3 406.8,361.5 416.0,331.5 425.3,359.1 433.2,329.1 441.1,375.2 447.4,345.2 453.7,369.0 462.0,339.0 470.3,359.7 477.7,329.7 485.1,371.7 492.8,341.7 500.5,372.1 507.1,342.1 513.7,363.3 520.1,333.3 526.5,368.1 536.0,338.1 532,368 532,404" fill="#2a581b" />
<ellipse cx="462" cy="384" rx="74" ry="15" fill="#2f641f" filter="url(#b1)"/>
<ellipse cx="404" cy="374" rx="20" ry="14" fill="#3a7424" filter="url(#b1)"/>
<ellipse cx="40" cy="350" rx="9" ry="14" fill="#4a8a28" opacity="0.38" filter="url(#b1)"/>
<ellipse cx="75" cy="356" rx="10" ry="15" fill="#4a8a28" opacity="0.38" filter="url(#b1)"/>
<ellipse cx="112" cy="348" rx="9" ry="14" fill="#4a8a28" opacity="0.38" filter="url(#b1)"/>
<ellipse cx="150" cy="352" rx="10" ry="15" fill="#4a8a28" opacity="0.38" filter="url(#b1)"/>
<ellipse cx="190" cy="350" rx="9" ry="14" fill="#4a8a28" opacity="0.38" filter="url(#b1)"/>
<ellipse cx="222" cy="360" rx="10" ry="15" fill="#4a8a28" opacity="0.38" filter="url(#b1)"/>
<ellipse cx="262" cy="364" rx="12" ry="18" fill="#4a8a28" opacity="0.38" filter="url(#b1)"/>
<ellipse cx="300" cy="372" rx="11" ry="16" fill="#4a8a28" opacity="0.38" filter="url(#b1)"/>
<ellipse cx="336" cy="376" rx="12" ry="18" fill="#4a8a28" opacity="0.38" filter="url(#b1)"/>
<ellipse cx="372" cy="380" rx="10" ry="15" fill="#4a8a28" opacity="0.38" filter="url(#b1)"/>
<ellipse cx="430" cy="366" rx="9" ry="14" fill="#4a8a28" opacity="0.38" filter="url(#b1)"/>
<ellipse cx="470" cy="360" rx="10" ry="15" fill="#4a8a28" opacity="0.38" filter="url(#b1)"/>
<ellipse cx="505" cy="364" rx="9" ry="14" fill="#4a8a28" opacity="0.38" filter="url(#b1)"/>
<rect x="350" y="371" width="26" height="13" fill="#4a382c"/>
<rect x="314" y="366" width="10" height="7" fill="#dcd8d0"/>
<polygon points="12,376 60,384 120,398 200,410 300,421 380,405 460,397 532,393 532,532 12,532" fill="url(#gfore)" />
<polygon points="12,376 60,384 120,398 200,410 262,418 180,440 80,452 12,440" fill="#84c82a" />
<polygon points="12,470 200,452 360,458 532,440 532,532 12,532" fill="#a2d444" opacity="0.8"/>
<polygon points="12,500 300,486 532,478 532,532 12,532" fill="#b2da58" opacity="0.7"/>
<polygon points="100,394 160,408 230,420 300,424 362,414 372,436 300,442 230,436 160,420" fill="#a4d63e" />
<path d="M86,392 C150,412 230,438 352,440" fill="none" stroke="#8a8f80" stroke-width="5.5"/>
<path d="M12,482 C60,478 90,470 120,468" fill="none" stroke="#8aa860" stroke-width="2"/>
<ellipse cx="298" cy="430" rx="11" ry="14" fill="#6cb02c"/>
<ellipse cx="68" cy="464" rx="8" ry="9" fill="#7cbc34"/>
<rect x="12" y="150" width="520" height="382" filter="url(#noise)" opacity="0.55"/>
<polygon points="382,412 452,394 472,414 404,430" fill="#4c3a30" />
<polygon points="404,430 472,414 474,440 408,452" fill="#9a4f2e" />
<polygon points="362,424 398,418 406,432 370,438" fill="#5a4a40" />
<polygon points="360,438 406,432 408,456 362,458" fill="#4f9a7e" />
<rect x="410" y="436" width="30" height="18" fill="#b0502e"/>
<rect x="444" y="420" width="10" height="22" fill="#ece6de"/>
<rect x="466" y="424" width="26" height="12" fill="#c8402c"/>
<rect x="478" y="418" width="34" height="8" fill="#e8e4dc"/>
<rect x="374" y="446" width="22" height="10" fill="#7a2e22"/>
<ellipse cx="516" cy="418" rx="14" ry="8" fill="#3f7a28"/>
</g>
<g transform="translate(371.3,253.2) scale(0.28462,0.28494) translate(-12,-12)" clip-path="url(#cph)" filter="url(#soft)">
<rect x="12" y="12" width="520" height="200" fill="url(#gsky)"/>
<rect x="12" y="12" width="520" height="200" fill="url(#gskyr)"/>
<ellipse cx="36" cy="38" rx="30" ry="12" fill="#fff" opacity="0.9" filter="url(#b3)"/>
<ellipse cx="420" cy="58" rx="110" ry="20" fill="#fff" opacity="0.4" filter="url(#b8)"/>
<ellipse cx="290" cy="44" rx="80" ry="7" fill="#fff" opacity="0.28" filter="url(#b8)"/>
<ellipse cx="490" cy="28" rx="60" ry="14" fill="#fff" opacity="0.35" filter="url(#b8)"/>
<ellipse cx="180" cy="30" rx="14" ry="22" fill="#fff" opacity="0.22" filter="url(#b3)" transform="rotate(25 180 30)"/>
<polygon points="395,118 420,110 440,104 462,108 490,100 532,96 532,150 395,150" fill="#a7b4c4" opacity="0.85"/>
<polygon points="40,108 48,88 54,80 62,84 71,74 80,84 91,80 99,70 108,63 115,70 122,77 130,86 136,86 143,78 150,73 157,68 164,63 171,68 178,71 184,78 190,80 196,76 201,74 208,84 218,94 226,98 235,100 244,94 252,90 263,85 270,90 277,91 285,82 292,82 299,79 306,84 313,88 320,90 325,91 332,100 339,105 348,104 356,102 366,100 375,99 385,102 395,105 409,111 425,110 440,105 452,110 452,165 40,165" fill="url(#grock)" />
<polygon points="44.0,99.9 48.3,102.2 47.4,145.9 44.9,141.3" fill="#7f6c68" opacity="0.45"/>
<polygon points="48.8,89.0 53.3,89.4 52.4,131.7 49.7,127.4" fill="#7f6c68" opacity="0.39"/>
<polygon points="55.3,83.9 60.6,86.4 59.6,131.5 56.4,126.7" fill="#f0e2d4" opacity="0.50"/>
<polygon points="61.0,85.3 63.6,85.4 63.1,108.9 61.5,106.5" fill="#7f6c68" opacity="0.37"/>
<polygon points="64.7,83.6 69.0,86.2 68.1,119.1 65.6,115.5" fill="#f0e2d4" opacity="0.45"/>
<polygon points="70.1,80.0 73.7,81.3 73.0,127.9 70.9,123.1" fill="#f0e2d4" opacity="0.51"/>
<polygon points="74.3,82.4 78.0,84.0 77.2,124.4 75.1,120.2" fill="#7f6c68" opacity="0.55"/>
<polygon points="80.4,84.4 86.3,88.3 85.1,111.8 81.6,109.1" fill="#f0e2d4" opacity="0.44"/>
<polygon points="87.3,83.4 90.0,84.8 89.5,125.7 87.8,121.5" fill="#7f6c68" opacity="0.33"/>
<polygon points="92.5,79.0 98.0,82.2 96.9,107.4 93.6,104.5" fill="#7f6c68" opacity="0.32"/>
<polygon points="98.4,72.3 103.2,74.9 102.2,99.3 99.4,96.6" fill="#f0e2d4" opacity="0.34"/>
<polygon points="103.5,67.6 107.6,68.8 106.8,96.6 104.3,93.7" fill="#f0e2d4" opacity="0.54"/>
<polygon points="109.9,69.7 113.2,73.6 112.5,113.9 110.5,109.5" fill="#f0e2d4" opacity="0.33"/>
<polygon points="113.7,74.7 117.3,75.1 116.6,105.3 114.4,102.2" fill="#7f6c68" opacity="0.32"/>
<polygon points="118.7,79.2 122.2,81.2 121.5,110.9 119.4,107.7" fill="#7f6c68" opacity="0.59"/>
<polygon points="123.6,86.5 129.6,87.5 128.4,112.5 124.8,109.9" fill="#f0e2d4" opacity="0.55"/>
<polygon points="130.1,88.9 135.5,91.3 134.4,116.0 131.2,113.3" fill="#f0e2d4" opacity="0.56"/>
<polygon points="136.6,85.9 139.5,87.0 138.9,133.0 137.2,128.3" fill="#7f6c68" opacity="0.51"/>
<polygon points="141.6,80.9 146.4,81.8 145.5,107.4 142.5,104.8" fill="#f0e2d4" opacity="0.32"/>
<polygon points="147.8,76.6 153.8,76.6 152.6,105.9 149.0,102.9" fill="#f0e2d4" opacity="0.36"/>
<polygon points="154.4,70.5 158.7,71.0 157.9,97.1 155.3,94.4" fill="#7f6c68" opacity="0.47"/>
<polygon points="159.6,69.1 165.7,69.6 164.5,108.2 160.8,104.3" fill="#f0e2d4" opacity="0.48"/>
<polygon points="165.8,68.9 168.3,71.4 167.8,109.1 166.3,105.1" fill="#f0e2d4" opacity="0.31"/>
<polygon points="169.5,71.0 175.0,73.9 173.9,119.0 170.6,114.2" fill="#7f6c68" opacity="0.46"/>
<polygon points="177.2,78.7 182.7,81.4 181.6,121.3 178.3,117.1" fill="#f0e2d4" opacity="0.41"/>
<polygon points="184.9,80.9 190.9,83.4 189.7,123.5 186.1,119.2" fill="#f0e2d4" opacity="0.47"/>
<polygon points="191.9,80.8 196.7,84.3 195.7,104.9 192.8,102.5" fill="#f0e2d4" opacity="0.60"/>
<polygon points="198.5,78.6 202.6,78.9 201.8,115.7 199.3,112.0" fill="#7f6c68" opacity="0.55"/>
<polygon points="204.4,84.7 207.1,86.6 206.5,119.2 205.0,115.7" fill="#7f6c68" opacity="0.51"/>
<polygon points="208.6,91.9 214.8,92.7 213.5,114.2 209.8,112.0" fill="#7f6c68" opacity="0.50"/>
<polygon points="215.2,97.8 221.3,100.5 220.1,131.3 216.4,128.0" fill="#f0e2d4" opacity="0.40"/>
<polygon points="221.8,100.5 226.0,102.9 225.2,146.3 222.7,141.7" fill="#f0e2d4" opacity="0.42"/>
<polygon points="226.8,100.6 229.9,104.4 229.3,144.4 227.4,140.0" fill="#f0e2d4" opacity="0.51"/>
<polygon points="230.6,101.3 233.7,103.9 233.1,130.5 231.2,127.6" fill="#7f6c68" opacity="0.42"/>
<polygon points="235.0,102.6 238.7,102.7 238.0,150.1 235.7,145.4" fill="#7f6c68" opacity="0.32"/>
<polygon points="240.9,98.3 243.6,98.4 243.1,135.2 241.5,131.5" fill="#7f6c68" opacity="0.54"/>
<polygon points="243.9,94.6 248.2,94.8 247.4,138.2 244.8,133.8" fill="#7f6c68" opacity="0.34"/>
<polygon points="249.8,93.2 254.1,95.9 253.3,132.2 250.7,128.3" fill="#f0e2d4" opacity="0.59"/>
<polygon points="254.6,89.8 259.0,90.5 258.1,112.0 255.5,109.8" fill="#7f6c68" opacity="0.51"/>
<polygon points="259.7,88.7 263.6,90.3 262.8,124.3 260.5,120.7" fill="#f0e2d4" opacity="0.53"/>
<polygon points="265.6,91.0 271.7,92.8 270.5,137.2 266.8,132.6" fill="#f0e2d4" opacity="0.34"/>
<polygon points="273.2,91.9 279.4,95.7 278.2,128.7 274.5,125.0" fill="#f0e2d4" opacity="0.54"/>
<polygon points="280.5,88.0 285.6,90.9 284.6,128.8 281.6,124.7" fill="#f0e2d4" opacity="0.49"/>
<polygon points="286.2,85.0 292.3,86.2 291.1,132.4 287.4,127.6" fill="#f0e2d4" opacity="0.54"/>
<polygon points="294.6,82.3 300.5,85.4 299.3,106.4 295.7,104.0" fill="#7f6c68" opacity="0.47"/>
<polygon points="301.7,85.3 304.3,86.7 303.8,109.0 302.2,106.6" fill="#f0e2d4" opacity="0.35"/>
<polygon points="306.3,86.8 309.3,89.5 308.7,122.2 306.9,118.7" fill="#f0e2d4" opacity="0.55"/>
<polygon points="311.7,91.8 316.2,92.9 315.3,116.0 312.6,113.6" fill="#7f6c68" opacity="0.46"/>
<polygon points="318.0,92.4 323.1,93.9 322.0,136.4 319.0,132.0" fill="#f0e2d4" opacity="0.39"/>
<polygon points="325.2,100.1 331.3,102.4 330.0,144.2 326.4,139.8" fill="#f0e2d4" opacity="0.46"/>
<polygon points="331.8,104.9 336.4,107.0 335.5,142.6 332.7,138.9" fill="#7f6c68" opacity="0.59"/>
<polygon points="337.4,106.4 343.1,108.6 342.0,141.2 338.6,137.7" fill="#f0e2d4" opacity="0.32"/>
<polygon points="344.2,107.2 350.5,109.0 349.2,136.2 345.4,133.3" fill="#7f6c68" opacity="0.34"/>
<polygon points="352.5,104.6 358.6,108.3 357.4,134.8 353.7,131.8" fill="#7f6c68" opacity="0.49"/>
<polygon points="358.9,102.0 364.6,103.3 363.4,129.0 360.1,126.3" fill="#7f6c68" opacity="0.51"/>
<polygon points="365.5,100.9 370.4,101.9 369.4,141.9 366.4,137.8" fill="#7f6c68" opacity="0.45"/>
<polygon points="370.9,101.0 375.5,101.7 374.6,132.8 371.8,129.6" fill="#7f6c68" opacity="0.46"/>
<polygon points="376.1,102.9 381.1,106.3 380.1,138.7 377.1,135.1" fill="#f0e2d4" opacity="0.48"/>
<polygon points="381.7,105.2 387.1,108.9 386.0,150.6 382.8,146.1" fill="#7f6c68" opacity="0.39"/>
<polygon points="387.7,107.5 394.2,108.5 392.9,133.0 389.0,130.4" fill="#7f6c68" opacity="0.52"/>
<polygon points="394.4,108.8 400.2,111.5 399.1,151.3 395.6,147.1" fill="#7f6c68" opacity="0.42"/>
<polygon points="400.3,110.9 403.6,112.9 402.9,156.6 400.9,152.0" fill="#f0e2d4" opacity="0.33"/>
<polygon points="405.5,113.2 410.0,113.3 409.1,140.1 406.4,137.4" fill="#7f6c68" opacity="0.33"/>
<polygon points="411.4,112.8 415.9,116.1 415.0,138.6 412.3,136.0" fill="#7f6c68" opacity="0.36"/>
<polygon points="418.4,111.2 424.6,114.2 423.4,134.8 419.6,132.4" fill="#f0e2d4" opacity="0.44"/>
<polygon points="425.4,111.6 429.8,114.4 428.9,144.8 426.3,141.5" fill="#f0e2d4" opacity="0.30"/>
<polygon points="431.9,109.3 435.1,110.0 434.5,150.6 432.6,146.4" fill="#7f6c68" opacity="0.36"/>
<polygon points="436.4,108.9 439.0,111.4 438.5,151.8 436.9,147.5" fill="#f0e2d4" opacity="0.56"/>
<polygon points="440.0,108.8 444.9,112.4 443.9,156.3 441.0,151.6" fill="#f0e2d4" opacity="0.38"/>
<ellipse cx="265" cy="140" rx="90" ry="15" fill="#f4f3f3" opacity="0.92" filter="url(#b3)"/>
<ellipse cx="26" cy="94" rx="18" ry="7" fill="#f2f2f2" opacity="0.85" filter="url(#b3)"/>
<polygon points="225,150 262,146 300,156 345,148 380,140 360,200 250,205" fill="#46705a" />
<polygon points="100,150 135,136 172,124 200,134 232,152 262,172 300,194 262,214 180,208 120,182" fill="#53804a" />
<polygon points="172,124 200,134 232,152 262,172 285,188 250,194 214,170 190,150" fill="#3f6b36" />
<ellipse cx="222" cy="166" rx="16" ry="8" fill="#86a868" opacity="0.7" filter="url(#b3)"/>
<polygon points="258,200 300,177 340,157 380,140 420,118 460,100 500,80 522,70 532,72 532,250 420,244 330,224" fill="url(#grh)" />
<ellipse cx="468" cy="166" rx="48" ry="15" fill="#6da23a" opacity="0.8" filter="url(#b3)"/>
<ellipse cx="400" cy="210" rx="70" ry="16" fill="#26501d" opacity="0.75" filter="url(#b3)"/>
<ellipse cx="500" cy="120" rx="16" ry="36" fill="#2c561f" opacity="0.55" filter="url(#b3)" transform="rotate(28 500 120)"/>
<rect x="488" y="184" width="22" height="6" fill="#a9b870" opacity="0.8"/>
<polygon points="12,86 30,97 60,119 100,145 140,165 175,180 208,194 150,214 12,214" fill="url(#glh)" />
<polygon points="12,196 60,200 110,204 150,192 180,186 208,196 262,208 330,224 420,242 532,248 532,440 12,440" fill="url(#gmid)" />
<polygon points="128,176 160,180 196,194 176,202 140,188" fill="#88c834" />
<ellipse cx="38" cy="226" rx="30" ry="9" fill="#2c5a1e" filter="url(#b1)"/>
<ellipse cx="214" cy="220" rx="30" ry="13" fill="#2b581d" filter="url(#b1)"/>
<ellipse cx="288" cy="222" rx="15" ry="10" fill="#2c5a1e" filter="url(#b1)"/>
<ellipse cx="296" cy="254" rx="62" ry="9" fill="#2f6020" filter="url(#b1)"/>
<ellipse cx="368" cy="240" rx="36" ry="12" fill="#2c5a1e" filter="url(#b1)"/>
<ellipse cx="188" cy="240" rx="20" ry="8" fill="#35681f" filter="url(#b1)"/>
<ellipse cx="150" cy="200" rx="14" ry="5" fill="#3a6c24" filter="url(#b1)"/>
<polygon points="76,222 126,218 134,232 84,237" fill="#b08c66" />
<rect x="68" y="242" width="9" height="6" fill="#f0ece4"/>
<rect x="67" y="239" width="11" height="3.4" fill="#8a5a3c"/>
<rect x="90" y="250" width="9" height="6" fill="#f0ece4"/>
<rect x="89" y="247" width="11" height="3.4" fill="#8a5a3c"/>
<rect x="106" y="244" width="9" height="6" fill="#f0ece4"/>
<rect x="105" y="241" width="11" height="3.4" fill="#8a5a3c"/>
<rect x="126" y="240" width="9" height="6" fill="#f0ece4"/>
<rect x="125" y="237" width="11" height="3.4" fill="#8a5a3c"/>
<rect x="146" y="236" width="9" height="6" fill="#f0ece4"/>
<rect x="145" y="233" width="11" height="3.4" fill="#8a5a3c"/>
<rect x="160" y="241" width="9" height="6" fill="#f0ece4"/>
<rect x="159" y="238" width="11" height="3.4" fill="#8a5a3c"/>
<rect x="82" y="258" width="9" height="6" fill="#f0ece4"/>
<rect x="81" y="255" width="11" height="3.4" fill="#8a5a3c"/>
<rect x="138" y="247" width="9" height="6" fill="#f0ece4"/>
<rect x="137" y="244" width="11" height="3.4" fill="#8a5a3c"/>
<rect x="147" y="222" width="4" height="14" fill="#f4f0ea"/>
<rect x="322" y="236" width="9" height="6" fill="#ece6dc"/>
<rect x="276" y="238" width="9" height="6" fill="#ece6dc"/>
<rect x="438" y="250" width="9" height="6" fill="#ece6dc"/>
<rect x="452" y="257" width="9" height="6" fill="#ece6dc"/>
<rect x="486" y="282" width="9" height="6" fill="#ece6dc"/>
<rect x="505" y="288" width="9" height="6" fill="#ece6dc"/>
<rect x="446" y="264" width="9" height="6" fill="#ece6dc"/>
<polygon points="12,238 60,242 100,262 60,286 12,292" fill="#7cc42c" />
<polygon points="38,294 80,268 120,258 200,258 276,268 258,294 200,307 120,315 60,309" fill="#d6c466" />
<polygon points="110,262 200,260 262,270 240,284 150,282" fill="#e4d27c" opacity="0.85"/>
<ellipse cx="24" cy="282" rx="14" ry="8" fill="#3f7a26"/>
<polygon points="88,262 100,252 126,262 128,284 112,288" fill="#4a8a2a" filter="url(#b1)"/>
<polygon points="455,246 500,238 532,242 532,278 490,276 460,264" fill="#cbd258" />
<polygon points="380,254 420,248 440,264 400,270" fill="#b4d048" />
<polygon points="336,324 336,296.3 344.0,266.3 352.1,298.2 360.3,268.2 368.6,301.8 374.9,271.8 381.1,293.2 390.2,263.2 399.4,296.6 406.3,266.6 413.1,306.9 420.9,276.9 428.7,304.7 436.5,274.7 444.2,301.9 450.8,271.9 457.4,301.9 466.6,271.9 475.9,300.3 484.7,270.3 493.4,302.4 499.7,272.4 505.9,303.6 514.1,273.6 522.4,297.2 528.5,267.2 532,300 532,324" fill="#295619" />
<ellipse cx="444" cy="302" rx="96" ry="19" fill="#295619" filter="url(#b1)"/>
<ellipse cx="352" cy="292" rx="22" ry="12" fill="#356a22" filter="url(#b1)"/>
<ellipse cx="308" cy="282" rx="7" ry="12" fill="#2c5c1e"/>
<polygon points="12,302 120,315 200,307 258,294 320,297 380,319 480,329 532,323 532,440 12,440" fill="#92cc30" />
<polygon points="200,321 300,307 400,327 480,335 470,357 360,367 250,353" fill="#a6d438" />
<polygon points="340,331 470,337 476,357 380,367" fill="#c4dc50" opacity="0.9"/>
<polygon points="12,410 12,350.9 20.2,320.9 28.4,355.1 37.3,325.1 46.2,353.8 55.0,323.8 63.8,336.7 71.1,306.7 78.3,358.6 86.2,328.6 94.0,357.6 100.0,327.6 106.0,347.3 112.5,317.3 119.0,349.1 126.6,319.1 134.2,336.3 140.5,306.3 146.9,342.7 155.7,312.7 164.5,354.4 170.7,324.4 176.8,355.1 182.9,325.1 189.0,350.8 195.0,320.8 201.1,336.0 209.7,306.0 218.4,341.0 224.7,311.0 231.1,359.6 239.8,329.6 248.4,342.9 257.4,312.9 266.3,348.9 274.3,318.9 282.3,340.9 291.2,310.9 300,348 300,410" fill="#27531a" />
<ellipse cx="160" cy="386" rx="150" ry="22" fill="#2f641f" filter="url(#b1)"/>
<ellipse cx="60" cy="372" rx="50" ry="18" fill="#28561b" filter="url(#b1)"/>
<polygon points="230,410 230,368 390,368 390,410" fill="#34701f" /><ellipse cx="241.9" cy="365.4" rx="17.8" ry="18.5" fill="#34701f"/><ellipse cx="265.4" cy="365.6" rx="17.4" ry="16.5" fill="#34701f"/><ellipse cx="288.6" cy="362.2" rx="17.4" ry="16.8" fill="#34701f"/><ellipse cx="309.5" cy="369.5" rx="14.0" ry="14.8" fill="#34701f"/><ellipse cx="332.1" cy="361.1" rx="19.9" ry="17.2" fill="#34701f"/><ellipse cx="359.5" cy="360.5" rx="21.3" ry="18.8" fill="#34701f"/><ellipse cx="385.9" cy="367.8" rx="18.3" ry="13.9" fill="#34701f"/>
<ellipse cx="255" cy="380" rx="40" ry="22" fill="#2f661f" filter="url(#b1)"/>
<polygon points="392,404 392,367.3 399.4,337.3 406.8,361.5 416.0,331.5 425.3,359.1 433.2,329.1 441.1,375.2 447.4,345.2 453.7,369.0 462.0,339.0 470.3,359.7 477.7,329.7 485.1,371.7 492.8,341.7 500.5,372.1 507.1,342.1 513.7,363.3 520.1,333.3 526.5,368.1 536.0,338.1 532,368 532,404" fill="#2a581b" />
<ellipse cx="462" cy="384" rx="74" ry="15" fill="#2f641f" filter="url(#b1)"/>
<ellipse cx="404" cy="374" rx="20" ry="14" fill="#3a7424" filter="url(#b1)"/>
<ellipse cx="40" cy="350" rx="9" ry="14" fill="#4a8a28" opacity="0.38" filter="url(#b1)"/>
<ellipse cx="75" cy="356" rx="10" ry="15" fill="#4a8a28" opacity="0.38" filter="url(#b1)"/>
<ellipse cx="112" cy="348" rx="9" ry="14" fill="#4a8a28" opacity="0.38" filter="url(#b1)"/>
<ellipse cx="150" cy="352" rx="10" ry="15" fill="#4a8a28" opacity="0.38" filter="url(#b1)"/>
<ellipse cx="190" cy="350" rx="9" ry="14" fill="#4a8a28" opacity="0.38" filter="url(#b1)"/>
<ellipse cx="222" cy="360" rx="10" ry="15" fill="#4a8a28" opacity="0.38" filter="url(#b1)"/>
<ellipse cx="262" cy="364" rx="12" ry="18" fill="#4a8a28" opacity="0.38" filter="url(#b1)"/>
<ellipse cx="300" cy="372" rx="11" ry="16" fill="#4a8a28" opacity="0.38" filter="url(#b1)"/>
<ellipse cx="336" cy="376" rx="12" ry="18" fill="#4a8a28" opacity="0.38" filter="url(#b1)"/>
<ellipse cx="372" cy="380" rx="10" ry="15" fill="#4a8a28" opacity="0.38" filter="url(#b1)"/>
<ellipse cx="430" cy="366" rx="9" ry="14" fill="#4a8a28" opacity="0.38" filter="url(#b1)"/>
<ellipse cx="470" cy="360" rx="10" ry="15" fill="#4a8a28" opacity="0.38" filter="url(#b1)"/>
<ellipse cx="505" cy="364" rx="9" ry="14" fill="#4a8a28" opacity="0.38" filter="url(#b1)"/>
<rect x="350" y="371" width="26" height="13" fill="#4a382c"/>
<rect x="314" y="366" width="10" height="7" fill="#dcd8d0"/>
<polygon points="12,376 60,384 120,398 200,410 300,421 380,405 460,397 532,393 532,532 12,532" fill="url(#gfore)" />
<polygon points="12,376 60,384 120,398 200,410 262,418 180,440 80,452 12,440" fill="#84c82a" />
<polygon points="12,470 200,452 360,458 532,440 532,532 12,532" fill="#a2d444" opacity="0.8"/>
<polygon points="12,500 300,486 532,478 532,532 12,532" fill="#b2da58" opacity="0.7"/>
<polygon points="100,394 160,408 230,420 300,424 362,414 372,436 300,442 230,436 160,420" fill="#a4d63e" />
<path d="M86,392 C150,412 230,438 352,440" fill="none" stroke="#8a8f80" stroke-width="5.5"/>
<path d="M12,482 C60,478 90,470 120,468" fill="none" stroke="#8aa860" stroke-width="2"/>
<ellipse cx="298" cy="430" rx="11" ry="14" fill="#6cb02c"/>
<ellipse cx="68" cy="464" rx="8" ry="9" fill="#7cbc34"/>
<rect x="12" y="150" width="520" height="382" filter="url(#noise)" opacity="0.55"/>
<polygon points="382,412 452,394 472,414 404,430" fill="#4c3a30" />
<polygon points="404,430 472,414 474,440 408,452" fill="#9a4f2e" />
<polygon points="362,424 398,418 406,432 370,438" fill="#5a4a40" />
<polygon points="360,438 406,432 408,456 362,458" fill="#4f9a7e" />
<rect x="410" y="436" width="30" height="18" fill="#b0502e"/>
<rect x="444" y="420" width="10" height="22" fill="#ece6de"/>
<rect x="466" y="424" width="26" height="12" fill="#c8402c"/>
<rect x="478" y="418" width="34" height="8" fill="#e8e4dc"/>
<rect x="374" y="446" width="22" height="10" fill="#7a2e22"/>
<ellipse cx="516" cy="418" rx="14" ry="8" fill="#3f7a28"/>
</g>
<rect x="193.2" y="253.2" width="148" height="147.6" fill="none" stroke="#b9b9b9" stroke-width="0.4"/>
<line x1="267.4" y1="242.3" x2="267.4" y2="253.2" stroke="#9a9a9a" stroke-width="0.5"/>
<circle cx="193.2" cy="253.2" r="2.0" fill="#fff" stroke="#8a8a8a" stroke-width="0.6"/>
<circle cx="193.2" cy="327.0" r="2.0" fill="#fff" stroke="#8a8a8a" stroke-width="0.6"/>
<circle cx="193.2" cy="400.8" r="2.0" fill="#fff" stroke="#8a8a8a" stroke-width="0.6"/>
<circle cx="267.3" cy="253.2" r="2.0" fill="#fff" stroke="#8a8a8a" stroke-width="0.6"/>
<circle cx="267.3" cy="400.8" r="2.0" fill="#fff" stroke="#8a8a8a" stroke-width="0.6"/>
<circle cx="341.2" cy="253.2" r="2.0" fill="#fff" stroke="#8a8a8a" stroke-width="0.6"/>
<circle cx="341.2" cy="327.0" r="2.0" fill="#fff" stroke="#8a8a8a" stroke-width="0.6"/>
<circle cx="341.2" cy="400.8" r="2.0" fill="#fff" stroke="#8a8a8a" stroke-width="0.6"/>
<circle cx="267.4" cy="238.4" r="3.9" fill="#fff" stroke="#8a8a8a" stroke-width="0.7"/><path d="M265.2,238.8 a2.3,2.3 0 1 1 2.4,2.0" fill="none" stroke="#8a8a8a" stroke-width="0.7"/><polygon points="270.6,236.9 272.8,238.5 270.4,239.6" fill="#8a8a8a"/>
<rect x="486.0" y="121.0" width="182.79999999999995" height="361.9" fill="#ffffff" stroke="#c4c4c4" stroke-width="0.7"/>
<rect x="486.40" y="121.30" width="173.80" height="8.30" fill="#efefef" />
<text x="490.40" y="127.25" font-size="5.0" fill="#444" text-anchor="start" >进入</text>
<rect x="486.40" y="202.00" width="173.80" height="9.60" fill="#efefef" />
<text x="490.40" y="208.60" font-size="5.0" fill="#444" text-anchor="start" >强调</text>
<rect x="486.40" y="308.40" width="173.80" height="9.60" fill="#efefef" />
<text x="490.40" y="315.00" font-size="5.0" fill="#444" text-anchor="start" >退出</text>
<rect x="486.40" y="391.00" width="173.80" height="9.80" fill="#efefef" />
<text x="490.40" y="397.70" font-size="5.0" fill="#444" text-anchor="start" >动作路径</text>
<rect x="660.60" y="121.40" width="7.00" height="303.80" fill="#f0f0f0" />
<rect x="661" y="129" width="6.2" height="266" fill="#ffffff" stroke="#c8c8c8" stroke-width="0.5"/>
<rect x="661" y="122" width="6.2" height="6.4" fill="#ffffff" stroke="#c8c8c8" stroke-width="0.5"/><polygon points="662.9,126 665.3,126 664.1,124.3" fill="#444"/>
<rect x="661" y="418.4" width="6.2" height="6.4" fill="#ffffff" stroke="#c8c8c8" stroke-width="0.5"/><polygon points="662.9,420.8 665.3,420.8 664.1,422.5" fill="#444"/>
<line x1="486.4" y1="425.6" x2="668.4" y2="425.6" stroke="#e2e2e2" stroke-width="0.6"/>
<polygon points="504.00,133.31 505.35,136.94 509.22,137.10 506.19,139.51 507.23,143.24 504.00,141.10 500.77,143.24 501.81,139.51 498.78,137.10 502.65,136.94" fill="#45957b" /><line x1="506.09" y1="134.70" x2="506.89" y2="133.12" stroke="#45957b" stroke-width="0.75"/><line x1="507.25" y1="135.55" x2="508.51" y2="134.29" stroke="#45957b" stroke-width="0.75"/><line x1="508.55" y1="139.52" x2="510.29" y2="139.80" stroke="#45957b" stroke-width="0.75"/><line x1="508.10" y1="140.89" x2="509.68" y2="141.69" stroke="#45957b" stroke-width="0.75"/><line x1="504.72" y1="143.35" x2="505.00" y2="145.09" stroke="#45957b" stroke-width="0.75"/><line x1="503.28" y1="143.35" x2="503.00" y2="145.09" stroke="#45957b" stroke-width="0.75"/><line x1="499.90" y1="140.89" x2="498.32" y2="141.69" stroke="#45957b" stroke-width="0.75"/><line x1="499.45" y1="139.52" x2="497.71" y2="139.80" stroke="#45957b" stroke-width="0.75"/><line x1="500.75" y1="135.55" x2="499.49" y2="134.29" stroke="#45957b" stroke-width="0.75"/><line x1="501.91" y1="134.70" x2="501.11" y2="133.12" stroke="#45957b" stroke-width="0.75"/>
<text x="504.00" y="150.20" font-size="5.0" fill="#444" text-anchor="middle" >出现</text>
<polygon points="538.70,132.70 540.16,136.60 544.31,136.78 541.06,139.37 542.17,143.37 538.70,141.08 535.23,143.37 536.34,139.37 533.09,136.78 537.24,136.60" fill="url(#gfade)" />
<text x="538.70" y="150.20" font-size="5.0" fill="#444" text-anchor="middle" >淡出</text>
<polygon points="573.30,132.70 574.76,136.60 578.91,136.78 575.66,139.37 576.77,143.37 573.30,141.08 569.83,143.37 570.94,139.37 567.69,136.78 571.84,136.60" fill="#45957b" /><polygon points="573.30,136.79 573.80,138.12 575.21,138.18 574.10,139.06 574.48,140.42 573.30,139.64 572.12,140.42 572.50,139.06 571.39,138.18 572.80,138.12" fill="#fff" />
<text x="573.30" y="150.20" font-size="5.0" fill="#444" text-anchor="middle" >飞入</text>
<polygon points="608.00,132.70 609.46,136.60 613.61,136.78 610.36,139.37 611.47,143.37 608.00,141.08 604.53,143.37 605.64,139.37 602.39,136.78 606.54,136.60" fill="#45957b" /><polygon points="608.00,136.79 608.50,138.12 609.91,138.18 608.80,139.06 609.18,140.42 608.00,139.64 606.82,140.42 607.20,139.06 606.09,138.18 607.50,138.12" fill="#fff" />
<text x="608.00" y="150.20" font-size="5.0" fill="#444" text-anchor="middle" >浮入</text>
<polygon points="642.40,132.70 643.86,136.60 648.01,136.78 644.76,139.37 645.87,143.37 642.40,141.08 638.93,143.37 640.04,139.37 636.79,136.78 640.94,136.60" fill="#45957b" /><line x1="642.40" y1="132.70" x2="642.40" y2="144.50" stroke="#fff" stroke-width="0.7"/>
<text x="642.40" y="150.20" font-size="5.0" fill="#444" text-anchor="middle" >劈裂</text>
<polygon points="504.00,156.50 505.46,160.40 509.61,160.58 506.36,163.17 507.47,167.17 504.00,164.88 500.53,167.17 501.64,163.17 498.39,160.58 502.54,160.40" fill="url(#gfade)" />
<text x="504.00" y="174.00" font-size="5.0" fill="#444" text-anchor="middle" >擦除</text>
<polygon points="538.70,156.50 540.16,160.40 544.31,160.58 541.06,163.17 542.17,167.17 538.70,164.88 535.23,167.17 536.34,163.17 533.09,160.58 537.24,160.40" fill="#45957b" /><polygon points="538.70,160.59 539.20,161.92 540.61,161.98 539.50,162.86 539.88,164.22 538.70,163.44 537.52,164.22 537.90,162.86 536.79,161.98 538.20,161.92" fill="#fff" />
<text x="538.70" y="174.00" font-size="5.0" fill="#444" text-anchor="middle" >形状</text>
<polygon points="573.30,156.50 574.76,160.40 578.91,160.58 575.66,163.17 576.77,167.17 573.30,164.88 569.83,167.17 570.94,163.17 567.69,160.58 571.84,160.40" fill="#45957b" />
<text x="573.30" y="174.00" font-size="5.0" fill="#444" text-anchor="middle" >轮子</text>
<polygon points="608.00,156.50 609.46,160.40 613.61,160.58 610.36,163.17 611.47,167.17 608.00,164.88 604.53,167.17 605.64,163.17 602.39,160.58 606.54,160.40" fill="#45957b" /><line x1="602.10" y1="159.80" x2="613.90" y2="159.80" stroke="#fff" stroke-width="0.45"/><line x1="602.10" y1="161.50" x2="613.90" y2="161.50" stroke="#fff" stroke-width="0.45"/><line x1="602.10" y1="163.20" x2="613.90" y2="163.20" stroke="#fff" stroke-width="0.45"/><line x1="602.10" y1="164.90" x2="613.90" y2="164.90" stroke="#fff" stroke-width="0.45"/><line x1="602.10" y1="166.60" x2="613.90" y2="166.60" stroke="#fff" stroke-width="0.45"/>
<text x="608.00" y="174.00" font-size="5.0" fill="#444" text-anchor="middle" >随机线条</text>
<polygon points="645.62,157.17 645.64,160.49 648.72,161.77 645.56,162.82 645.30,166.14 643.32,163.46 640.08,164.24 642.02,161.53 640.28,158.69 643.46,159.69" fill="#45957b" /><polygon points="638.93,161.18 640.20,162.83 642.21,162.30 641.04,164.02 642.16,165.77 640.17,165.18 638.85,166.79 638.79,164.71 636.85,163.96 638.81,163.26" fill="#45957b" /><path d="M638.10,161.20 q0.4,-2.6 3,-3.2" stroke="#45957b" stroke-width="0.7" fill="none"/>
<text x="642.40" y="174.00" font-size="5.0" fill="#444" text-anchor="middle" >翻转式由远...</text>
<polygon points="504.00,181.88 505.17,185.00 508.49,185.14 505.89,187.21 506.77,190.42 504.00,188.58 501.23,190.42 502.11,187.21 499.51,185.14 502.83,185.00" fill="#45957b" /><polygon points="504.00,185.05 504.41,186.14 505.57,186.19 504.66,186.91 504.97,188.04 504.00,187.39 503.03,188.04 503.34,186.91 502.43,186.19 503.59,186.14" fill="#fff" /><polygon points="500.93,183.53 497.98,182.94 500.34,180.58" fill="#45957b"/><polygon points="500.93,189.67 497.98,190.26 500.34,192.62" fill="#45957b"/><polygon points="507.07,183.53 510.02,182.94 507.66,180.58" fill="#45957b"/><polygon points="507.07,189.67 510.02,190.26 507.66,192.62" fill="#45957b"/>
<text x="504.00" y="197.90" font-size="5.0" fill="#444" text-anchor="middle" >缩放</text>
<polygon points="538.70,181.77 540.04,185.36 543.86,185.52 540.87,187.90 541.89,191.59 538.70,189.48 535.51,191.59 536.53,187.90 533.54,185.52 537.36,185.36" fill="#45957b" /><path d="M535.50,183.30 a3.4,1.6 0 1 1 6.2,0.4" stroke="#45957b" stroke-width="0.8" fill="none"/><polygon points="542.50,182.90 540.70,184.10 542.60,184.90" fill="#45957b"/>
<text x="538.70" y="197.90" font-size="5.0" fill="#444" text-anchor="middle" >旋转</text>
<polygon points="570.93,180.83 573.22,183.79 576.84,182.84 574.73,185.93 576.75,189.08 573.16,188.03 570.79,190.93 570.68,187.19 567.19,185.82 570.71,184.56" fill="#45957b" /><path d="M575.50,188.50 l1.3,2.2 l1.6,-3.6" stroke="#45957b" stroke-width="0.8" fill="none"/>
<text x="573.30" y="197.90" font-size="5.0" fill="#444" text-anchor="middle" >弹跳</text>
<polygon points="504.00,214.70 505.46,218.60 509.61,218.78 506.36,221.37 507.47,225.37 504.00,223.08 500.53,225.37 501.64,221.37 498.39,218.78 502.54,218.60" fill="#ecb050" /><polygon points="504.00,218.44 504.58,220.00 506.24,220.07 504.94,221.11 505.39,222.71 504.00,221.79 502.61,222.71 503.06,221.11 501.76,220.07 503.42,220.00" fill="#fff" />
<text x="504.00" y="232.20" font-size="5.0" fill="#444" text-anchor="middle" >脉冲</text>
<polygon points="538.70,216.18 539.87,219.30 543.19,219.44 540.59,221.51 541.47,224.72 538.70,222.88 535.93,224.72 536.81,221.51 534.21,219.44 537.53,219.30" fill="#ecb050" /><polygon points="538.70,218.17 539.40,220.04 541.39,220.12 539.83,221.37 540.36,223.29 538.70,222.19 537.04,223.29 537.57,221.37 536.01,220.12 538.00,220.04" fill="#fff" /><line x1="543.90" y1="222.70" x2="545.54" y2="223.36" stroke="#ecb050" stroke-width="0.6"/><line x1="540.89" y1="225.76" x2="541.58" y2="227.39" stroke="#ecb050" stroke-width="0.6"/><line x1="536.60" y1="225.80" x2="535.94" y2="227.44" stroke="#ecb050" stroke-width="0.6"/><line x1="533.54" y1="222.79" x2="531.91" y2="223.48" stroke="#ecb050" stroke-width="0.6"/><line x1="533.50" y1="218.50" x2="531.86" y2="217.84" stroke="#ecb050" stroke-width="0.6"/><line x1="536.51" y1="215.44" x2="535.82" y2="213.81" stroke="#ecb050" stroke-width="0.6"/><line x1="540.80" y1="215.40" x2="541.46" y2="213.76" stroke="#ecb050" stroke-width="0.6"/><line x1="543.86" y1="218.41" x2="545.49" y2="217.72" stroke="#ecb050" stroke-width="0.6"/>
<text x="538.70" y="232.20" font-size="5.0" fill="#444" text-anchor="middle" >彩色脉冲</text>
<polygon points="575.04,214.96 575.28,219.12 579.20,220.52 575.33,222.03 575.20,226.18 572.57,222.97 568.58,224.14 570.82,220.64 568.48,217.20 572.50,218.25" fill="#ecb050" /><path d="M571.80,224.00 l1.2,1.8 l1.4,-1.8" stroke="#fff" stroke-width="0.7" fill="none"/>
<text x="573.30" y="232.20" font-size="5.0" fill="#444" text-anchor="middle" >跷跷板</text>
<polygon points="609.94,216.14 610.35,219.94 614.02,221.05 610.53,222.62 610.60,226.44 608.04,223.61 604.42,224.87 606.32,221.55 604.01,218.50 607.76,219.28" fill="#ecb050" /><path d="M603.60,218.60 q0.6,-3 3.4,-3.2" stroke="#ecb050" stroke-width="0.8" fill="none"/><polygon points="606.60,214.40 608.20,215.60 606.40,216.60" fill="#ecb050"/>
<text x="608.00" y="232.20" font-size="5.0" fill="#444" text-anchor="middle" >陀螺旋</text>
<polygon points="644.85,215.00 645.44,218.69 649.08,219.60 645.74,221.30 646.01,225.03 643.36,222.39 639.89,223.79 641.58,220.45 639.18,217.59 642.87,218.17" fill="#ecb050" /><polygon points="637.40,222.00 639.80,219.00 641.40,221.20 638.80,223.80" fill="#fff" stroke="#9a9a9a" stroke-width="0.45"/>
<text x="642.40" y="232.20" font-size="5.0" fill="#444" text-anchor="middle" >放大/缩小</text>
<polygon points="504.00,239.10 505.46,243.00 509.61,243.18 506.36,245.77 507.47,249.77 504.00,247.48 500.53,249.77 501.64,245.77 498.39,243.18 502.54,243.00" fill="#ecb050" /><polygon points="504.00,239.10 505.46,243.00 509.61,243.18 506.36,245.77 507.47,249.77 504.00,247.48" fill="#b0a692"/>
<text x="504.00" y="256.60" font-size="5.0" fill="#444" text-anchor="middle" >不饱和</text>
<polygon points="538.70,239.10 540.16,243.00 544.31,243.18 541.06,245.77 542.17,249.77 538.70,247.48 535.23,249.77 536.34,245.77 533.09,243.18 537.24,243.00" fill="#ecb050" /><polygon points="538.70,239.10 540.16,243.00 544.31,243.18 541.06,245.77 542.17,249.77 538.70,247.48" fill="#6a5a44"/>
<text x="538.70" y="256.60" font-size="5.0" fill="#444" text-anchor="middle" >加深</text>
<polygon points="573.30,239.10 574.76,243.00 578.91,243.18 575.66,245.77 576.77,249.77 573.30,247.48 569.83,249.77 570.94,245.77 567.69,243.18 571.84,243.00" fill="#ecb050" /><polygon points="573.30,239.10 574.76,243.00 578.91,243.18 575.66,245.77 576.77,249.77 573.30,247.48" fill="#f4d6a0"/>
<text x="573.30" y="256.60" font-size="5.0" fill="#444" text-anchor="middle" >变淡</text>
<polygon points="608.00,239.10 609.46,243.00 613.61,243.18 610.36,245.77 611.47,249.77 608.00,247.48 604.53,249.77 605.64,245.77 602.39,243.18 606.54,243.00" fill="#ecb050" /><polygon points="608.00,239.10 609.46,243.00 613.61,243.18 610.36,245.77 611.47,249.77 608.00,247.48" fill="#f8e6c4"/>
<text x="608.00" y="256.60" font-size="5.0" fill="#444" text-anchor="middle" >透明</text>
<polygon points="642.40,239.10 643.86,243.00 648.01,243.18 644.76,245.77 645.87,249.77 642.40,247.48 638.93,249.77 640.04,245.77 636.79,243.18 640.94,243.00" fill="#ecb050" /><polygon points="642.40,239.10 643.86,243.00 648.01,243.18 644.76,245.77 645.87,249.77 642.40,247.48" fill="#3c7ccc"/>
<text x="642.40" y="256.60" font-size="5.0" fill="#444" text-anchor="middle" >对象颜色</text>
<polygon points="504.00,263.40 505.46,267.30 509.61,267.48 506.36,270.07 507.47,274.07 504.00,271.78 500.53,274.07 501.64,270.07 498.39,267.48 502.54,267.30" fill="#ecb050" /><polygon points="504.00,263.40 505.46,267.30 509.61,267.48 506.36,270.07 507.47,274.07 504.00,271.78" fill="#8a4fb0"/>
<text x="504.00" y="280.90" font-size="5.0" fill="#444" text-anchor="middle" >补色</text>
<polygon points="538.70,263.40 540.16,267.30 544.31,267.48 541.06,270.07 542.17,274.07 538.70,271.78 535.23,274.07 536.34,270.07 533.09,267.48 537.24,267.30" fill="#ecb050" /><polygon points="538.70,263.40 540.16,267.30 544.31,267.48 541.06,270.07 542.17,274.07 538.70,271.78" fill="#c4a46c"/>
<text x="538.70" y="280.90" font-size="5.0" fill="#444" text-anchor="middle" >线条颜色</text>
<polygon points="573.30,263.40 574.76,267.30 578.91,267.48 575.66,270.07 576.77,274.07 573.30,271.78 569.83,274.07 570.94,270.07 567.69,267.48 571.84,267.30" fill="#ecb050" /><polygon points="573.30,263.40 574.76,267.30 578.91,267.48 575.66,270.07 576.77,274.07 573.30,271.78" fill="#3c7ccc"/>
<text x="573.30" y="280.90" font-size="5.0" fill="#444" text-anchor="middle" >填充颜色</text>
<polygon points="608.00,263.40 609.46,267.30 613.61,267.48 610.36,270.07 611.47,274.07 608.00,271.78 604.53,274.07 605.64,270.07 602.39,267.48 606.54,267.30" fill="#b4b4b4" /><polygon points="608.00,267.71 608.47,268.96 609.80,269.02 608.75,269.85 609.11,271.13 608.00,270.39 606.89,271.13 607.25,269.85 606.20,269.02 607.53,268.96" fill="#dcdcdc" />
<text x="608.00" y="280.90" font-size="5.0" fill="#b8b8b8" text-anchor="middle" >画笔颜色</text>
<polygon points="642.40,263.40 643.86,267.30 648.01,267.48 644.76,270.07 645.87,274.07 642.40,271.78 638.93,274.07 640.04,270.07 636.79,267.48 640.94,267.30" fill="#b4b4b4" /><polygon points="642.40,267.71 642.87,268.96 644.20,269.02 643.15,269.85 643.51,271.13 642.40,270.39 641.29,271.13 641.65,269.85 640.60,269.02 641.93,268.96" fill="#dcdcdc" />
<text x="642.40" y="280.90" font-size="5.0" fill="#b8b8b8" text-anchor="middle" >字体颜色</text>
<polygon points="504.00,287.30 505.46,291.20 509.61,291.38 506.36,293.97 507.47,297.97 504.00,295.68 500.53,297.97 501.64,293.97 498.39,291.38 502.54,291.20" fill="#b4b4b4" /><polygon points="504.00,291.61 504.47,292.86 505.80,292.92 504.75,293.75 505.11,295.03 504.00,294.29 502.89,295.03 503.25,293.75 502.20,292.92 503.53,292.86" fill="#dcdcdc" />
<text x="504.00" y="304.80" font-size="5.0" fill="#b8b8b8" text-anchor="middle" >下划线</text>
<polygon points="538.70,289.37 539.72,292.10 542.63,292.22 540.35,294.04 541.13,296.84 538.70,295.23 536.27,296.84 537.05,294.04 534.77,292.22 537.68,292.10" fill="#b4b4b4" /><line x1="543.42" y1="293.20" x2="545.78" y2="293.20" stroke="#bcbcbc" stroke-width="0.5"/><line x1="542.79" y1="295.56" x2="544.83" y2="296.74" stroke="#bcbcbc" stroke-width="0.5"/><line x1="541.06" y1="297.29" x2="542.24" y2="299.33" stroke="#bcbcbc" stroke-width="0.5"/><line x1="538.70" y1="297.92" x2="538.70" y2="300.28" stroke="#bcbcbc" stroke-width="0.5"/><line x1="536.34" y1="297.29" x2="535.16" y2="299.33" stroke="#bcbcbc" stroke-width="0.5"/><line x1="534.61" y1="295.56" x2="532.57" y2="296.74" stroke="#bcbcbc" stroke-width="0.5"/><line x1="533.98" y1="293.20" x2="531.62" y2="293.20" stroke="#bcbcbc" stroke-width="0.5"/><line x1="534.61" y1="290.84" x2="532.57" y2="289.66" stroke="#bcbcbc" stroke-width="0.5"/><line x1="536.34" y1="289.11" x2="535.16" y2="287.07" stroke="#bcbcbc" stroke-width="0.5"/><line x1="538.70" y1="288.48" x2="538.70" y2="286.12" stroke="#bcbcbc" stroke-width="0.5"/><line x1="541.06" y1="289.11" x2="542.24" y2="287.07" stroke="#bcbcbc" stroke-width="0.5"/><line x1="542.79" y1="290.84" x2="544.83" y2="289.66" stroke="#bcbcbc" stroke-width="0.5"/>
<text x="538.70" y="304.80" font-size="5.0" fill="#b8b8b8" text-anchor="middle" >加粗闪烁</text>
<polygon points="573.30,287.30 574.76,291.20 578.91,291.38 575.66,293.97 576.77,297.97 573.30,295.68 569.83,297.97 570.94,293.97 567.69,291.38 571.84,291.20" fill="#b4b4b4" /><polygon points="573.30,291.61 573.77,292.86 575.10,292.92 574.05,293.75 574.41,295.03 573.30,294.29 572.19,295.03 572.55,293.75 571.50,292.92 572.83,292.86" fill="#dcdcdc" />
<text x="573.30" y="304.80" font-size="5.0" fill="#b8b8b8" text-anchor="middle" >加粗展示</text>
<polygon points="608.00,287.30 609.46,291.20 613.61,291.38 610.36,293.97 611.47,297.97 608.00,295.68 604.53,297.97 605.64,293.97 602.39,291.38 606.54,291.20" fill="#b4b4b4" /><polygon points="608.00,291.61 608.47,292.86 609.80,292.92 608.75,293.75 609.11,295.03 608.00,294.29 606.89,295.03 607.25,293.75 606.20,292.92 607.53,292.86" fill="#dcdcdc" />
<text x="608.00" y="304.80" font-size="5.0" fill="#b8b8b8" text-anchor="middle" >波浪形</text>
<polygon points="504.00,322.78 505.17,325.90 508.49,326.04 505.89,328.11 506.77,331.32 504.00,329.48 501.23,331.32 502.11,328.11 499.51,326.04 502.83,325.90" fill="#f3b9ad" /><polygon points="504.00,324.65 504.73,326.60 506.81,326.69 505.18,327.98 505.73,329.99 504.00,328.84 502.27,329.99 502.82,327.98 501.19,326.69 503.27,326.60" fill="#fff" /><line x1="508.49" y1="329.01" x2="510.02" y2="329.63" stroke="#db5237" stroke-width="0.7" opacity="0.8"/><line x1="505.89" y1="331.65" x2="506.54" y2="333.17" stroke="#db5237" stroke-width="0.7" opacity="0.8"/><line x1="502.19" y1="331.69" x2="501.57" y2="333.22" stroke="#db5237" stroke-width="0.7" opacity="0.8"/><line x1="499.55" y1="329.09" x2="498.03" y2="329.74" stroke="#db5237" stroke-width="0.7" opacity="0.8"/><line x1="499.51" y1="325.39" x2="497.98" y2="324.77" stroke="#db5237" stroke-width="0.7" opacity="0.8"/><line x1="502.11" y1="322.75" x2="501.46" y2="321.23" stroke="#db5237" stroke-width="0.7" opacity="0.8"/><line x1="505.81" y1="322.71" x2="506.43" y2="321.18" stroke="#db5237" stroke-width="0.7" opacity="0.8"/><line x1="508.45" y1="325.31" x2="509.97" y2="324.66" stroke="#db5237" stroke-width="0.7" opacity="0.8"/>
<text x="504.00" y="338.80" font-size="5.0" fill="#444" text-anchor="middle" >消失</text>
<polygon points="538.70,321.30 540.16,325.20 544.31,325.38 541.06,327.97 542.17,331.97 538.70,329.68 535.23,331.97 536.34,327.97 533.09,325.38 537.24,325.20" fill="#db5237" />
<text x="538.70" y="338.80" font-size="5.0" fill="#444" text-anchor="middle" >淡出</text>
<polygon points="573.30,321.30 574.76,325.20 578.91,325.38 575.66,327.97 576.77,331.97 573.30,329.68 569.83,331.97 570.94,327.97 567.69,325.38 571.84,325.20" fill="#db5237" /><polygon points="573.30,325.39 573.80,326.72 575.21,326.78 574.10,327.66 574.48,329.02 573.30,328.24 572.12,329.02 572.50,327.66 571.39,326.78 572.80,326.72" fill="#fff" />
<text x="573.30" y="338.80" font-size="5.0" fill="#444" text-anchor="middle" >飞出</text>
<polygon points="608.00,321.30 609.46,325.20 613.61,325.38 610.36,327.97 611.47,331.97 608.00,329.68 604.53,331.97 605.64,327.97 602.39,325.38 606.54,325.20" fill="#db5237" /><polygon points="608.00,325.39 608.50,326.72 609.91,326.78 608.80,327.66 609.18,329.02 608.00,328.24 606.82,329.02 607.20,327.66 606.09,326.78 607.50,326.72" fill="#fff" />
<text x="608.00" y="338.80" font-size="5.0" fill="#444" text-anchor="middle" >浮出</text>
<polygon points="642.40,321.30 643.86,325.20 648.01,325.38 644.76,327.97 645.87,331.97 642.40,329.68 638.93,331.97 640.04,327.97 636.79,325.38 640.94,325.20" fill="#db5237" /><line x1="642.40" y1="321.30" x2="642.40" y2="333.10" stroke="#fff" stroke-width="0.7"/>
<text x="642.40" y="338.80" font-size="5.0" fill="#444" text-anchor="middle" >劈裂</text>
<polygon points="504.00,345.10 505.46,349.00 509.61,349.18 506.36,351.77 507.47,355.77 504.00,353.48 500.53,355.77 501.64,351.77 498.39,349.18 502.54,349.00" fill="url(#gfadeR)" />
<text x="504.00" y="362.60" font-size="5.0" fill="#444" text-anchor="middle" >擦除</text>
<polygon points="538.70,345.10 540.16,349.00 544.31,349.18 541.06,351.77 542.17,355.77 538.70,353.48 535.23,355.77 536.34,351.77 533.09,349.18 537.24,349.00" fill="#db5237" /><polygon points="538.70,349.19 539.20,350.52 540.61,350.58 539.50,351.46 539.88,352.82 538.70,352.04 537.52,352.82 537.90,351.46 536.79,350.58 538.20,350.52" fill="#fff" />
<text x="538.70" y="362.60" font-size="5.0" fill="#444" text-anchor="middle" >形状</text>
<polygon points="573.30,345.10 574.76,349.00 578.91,349.18 575.66,351.77 576.77,355.77 573.30,353.48 569.83,355.77 570.94,351.77 567.69,349.18 571.84,349.00" fill="#db5237" />
<text x="573.30" y="362.60" font-size="5.0" fill="#444" text-anchor="middle" >轮子</text>
<polygon points="608.00,345.10 609.46,349.00 613.61,349.18 610.36,351.77 611.47,355.77 608.00,353.48 604.53,355.77 605.64,351.77 602.39,349.18 606.54,349.00" fill="#db5237" /><line x1="602.10" y1="348.40" x2="613.90" y2="348.40" stroke="#fff" stroke-width="0.45"/><line x1="602.10" y1="350.10" x2="613.90" y2="350.10" stroke="#fff" stroke-width="0.45"/><line x1="602.10" y1="351.80" x2="613.90" y2="351.80" stroke="#fff" stroke-width="0.45"/><line x1="602.10" y1="353.50" x2="613.90" y2="353.50" stroke="#fff" stroke-width="0.45"/><line x1="602.10" y1="355.20" x2="613.90" y2="355.20" stroke="#fff" stroke-width="0.45"/>
<text x="608.00" y="362.60" font-size="5.0" fill="#444" text-anchor="middle" >随机线条</text>
<polygon points="641.20,348.03 642.28,350.92 645.35,351.05 642.94,352.97 643.77,355.93 641.20,354.23 638.63,355.93 639.46,352.97 637.05,351.05 640.12,350.92" fill="#db5237" /><polygon points="646.53,346.03 646.63,347.78 648.28,348.36 646.65,349.00 646.60,350.75 645.49,349.39 643.82,349.88 644.76,348.41 643.77,346.97 645.46,347.41" fill="#db5237" /><path d="M638.80,347.80 q1.6,-2.6 4.2,-2.2" stroke="#db5237" stroke-width="0.7" fill="none" stroke-dasharray="0.9,0.6"/>
<text x="642.40" y="362.60" font-size="5.0" fill="#444" text-anchor="middle" >收缩并旋转</text>
<polygon points="504.00,370.58 505.17,373.70 508.49,373.84 505.89,375.91 506.77,379.12 504.00,377.28 501.23,379.12 502.11,375.91 499.51,373.84 502.83,373.70" fill="#db5237" /><polygon points="504.00,373.75 504.41,374.84 505.57,374.89 504.66,375.61 504.97,376.74 504.00,376.09 503.03,376.74 503.34,375.61 502.43,374.89 503.59,374.84" fill="#fff" /><polygon points="500.93,372.23 497.98,371.64 500.34,369.28" fill="#db5237"/><polygon points="500.93,378.37 497.98,378.96 500.34,381.32" fill="#db5237"/><polygon points="507.07,372.23 510.02,371.64 507.66,369.28" fill="#db5237"/><polygon points="507.07,378.37 510.02,378.96 507.66,381.32" fill="#db5237"/>
<text x="504.00" y="386.60" font-size="5.0" fill="#444" text-anchor="middle" >缩放</text>
<polygon points="538.70,370.47 540.04,374.06 543.86,374.22 540.87,376.60 541.89,380.29 538.70,378.18 535.51,380.29 536.53,376.60 533.54,374.22 537.36,374.06" fill="#db5237" /><path d="M535.50,372.00 a3.4,1.6 0 1 1 6.2,0.4" stroke="#db5237" stroke-width="0.8" fill="none"/><polygon points="542.50,371.60 540.70,372.80 542.60,373.60" fill="#db5237"/>
<text x="538.70" y="386.60" font-size="5.0" fill="#444" text-anchor="middle" >旋转</text>
<polygon points="570.93,369.53 573.22,372.49 576.84,371.54 574.73,374.63 576.75,377.78 573.16,376.73 570.79,379.63 570.68,375.89 567.19,374.52 570.71,373.26" fill="#db5237" /><path d="M575.50,377.20 l1.3,2.2 l1.6,-3.6" stroke="#db5237" stroke-width="0.8" fill="none"/>
<text x="573.30" y="386.60" font-size="5.0" fill="#444" text-anchor="middle" >弹跳</text>
<line x1="504.0" y1="405.0" x2="504.0" y2="414.20000000000005" stroke="#555" stroke-width="0.55" stroke-dasharray="1,0.7"/><circle cx="504.0" cy="404.40000000000003" r="0.9" fill="#3f9076"/><circle cx="504.0" cy="414.8" r="0.9" fill="#db5237"/>
<text x="504.00" y="421.30" font-size="5.0" fill="#444" text-anchor="middle" >直线</text>
<path d="M533.7,411.0 a5,5.2 0 0 1 10,0" fill="none" stroke="#555" stroke-width="0.55"/><circle cx="533.5" cy="411.20000000000005" r="0.9" fill="#3f9076"/><circle cx="543.9000000000001" cy="411.20000000000005" r="0.9" fill="#db5237"/>
<text x="538.70" y="421.30" font-size="5.0" fill="#444" text-anchor="middle" >弧形</text>
<path d="M567.6999999999999,404.6 h7 a4,4 0 0 1 4,4 v6" fill="none" stroke="#555" stroke-width="0.55"/><circle cx="567.5" cy="404.6" r="0.9" fill="#3f9076"/><circle cx="578.6999999999999" cy="414.8" r="0.9" fill="#db5237"/>
<text x="573.30" y="421.30" font-size="5.0" fill="#444" text-anchor="middle" >转弯</text>
<circle cx="608.0" cy="410.0" r="5.6" fill="none" stroke="#555" stroke-width="0.55"/><circle cx="608.0" cy="404.20000000000005" r="0.9" fill="#3f9076"/>
<text x="608.00" y="421.30" font-size="5.0" fill="#444" text-anchor="middle" >形状</text>
<circle cx="639.8" cy="409.6" r="2.9" fill="none" stroke="#555" stroke-width="0.55"/><circle cx="645.6" cy="409.6" r="2.9" fill="none" stroke="#555" stroke-width="0.55"/><circle cx="636.6" cy="409.6" r="0.9" fill="#3f9076"/>
<text x="642.40" y="421.30" font-size="5.0" fill="#444" text-anchor="middle" >循环</text>
<polygon points="492.00,428.30 492.72,430.21 494.76,430.30 493.16,431.58 493.70,433.55 492.00,432.42 490.30,433.55 490.84,431.58 489.24,430.30 491.28,430.21" fill="#45957b" />
<text x="500.60" y="433.00" font-size="5.0" fill="#444" text-anchor="start" >更多进入效果(E)...</text>
<polygon points="492.00,439.00 492.72,440.91 494.76,441.00 493.16,442.28 493.70,444.25 492.00,443.12 490.30,444.25 490.84,442.28 489.24,441.00 491.28,440.91" fill="#ecb050" />
<text x="500.60" y="443.70" font-size="5.0" fill="#444" text-anchor="start" >更多强调效果(M)...</text>
<polygon points="492.00,449.70 492.72,451.61 494.76,451.70 493.16,452.98 493.70,454.95 492.00,453.82 490.30,454.95 490.84,452.98 489.24,451.70 491.28,451.61" fill="#db5237" />
<text x="500.60" y="454.40" font-size="5.0" fill="#444" text-anchor="start" >更多退出效果(X)...</text>
<polygon points="492.00,460.60 492.69,462.25 494.47,462.40 493.11,463.56 493.53,465.30 492.00,464.37 490.47,465.30 490.89,463.56 489.53,462.40 491.31,462.25" fill="none" stroke="#555" stroke-width="0.5"/>
<text x="500.60" y="465.00" font-size="5.0" fill="#444" text-anchor="start" >其他动作路径(P)...</text>
<circle cx="491.2" cy="474.5" r="1.3" fill="none" stroke="#aaa" stroke-width="0.55"/><circle cx="493.4" cy="472.3" r="0.9" fill="none" stroke="#aaa" stroke-width="0.5"/>
<text x="500.60" y="475.40" font-size="5.0" fill="#b4b4b4" text-anchor="start" >OLE 操作动作(O)...</text>
<rect x="666" y="480.4" width="0.8" height="0.8" fill="#b0b0b0"/>
<rect x="664.4" y="480.4" width="0.8" height="0.8" fill="#b0b0b0"/>
<rect x="666" y="478.79999999999995" width="0.8" height="0.8" fill="#b0b0b0"/>
<rect x="60.3" y="71.2" width="25.7" height="19.9" fill="none" stroke="#f5262b" stroke-width="1.5"/>
<rect x="484.1" y="87.3" width="25.5" height="33.2" fill="none" stroke="#f5262b" stroke-width="1.5"/>
<rect x="488.0" y="447.8" width="54.4" height="9.4" fill="none" stroke="#f5262b" stroke-width="1.1"/>
<polygon points="129.02,187.48 82.11,103.12 84.02,102.02 76.40,96.60 77.26,105.91 79.17,104.81 128.58,187.72" fill="#f2282d"/>
<polygon points="371.64,195.21 477.17,128.00 478.05,129.34 482.40,122.30 474.21,123.48 475.09,124.82 371.36,194.79" fill="#f2282d"/>
<polygon points="412.81,455.65 473.17,454.63 473.26,457.03 481.60,452.70 472.95,449.04 473.04,451.43 412.79,455.15" fill="#f2282d"/>
</g></g>
<rect x="697.1" y="60.1" width="241.79999999999995" height="427.4" fill="#000" opacity="0.05"/>
<rect x="698.6" y="60.6" width="238.79999999999995" height="424.4" fill="#f0f0f0" stroke="#1f7cd6" stroke-width="1"/>
<rect x="699.10" y="61.10" width="237.80" height="24.40" fill="#ffffff" />
<text x="702.40" y="75.90" font-size="10.9" fill="#000" text-anchor="start" >添加退出效果</text>
<text x="875.40" y="76.00" font-size="12" fill="#111" text-anchor="middle" font-weight="bold" textLength="5.6" lengthAdjust="spacingAndGlyphs">?</text>
<path d="M911.4,66.9 l9.2,9.2 M920.6,66.9 l-9.2,9.2" stroke="#222" stroke-width="1.25"/>
<rect x="700.8" y="94.8" width="229.9000000000001" height="356.5" fill="#ffffff" stroke="#828790" stroke-width="1"/>
<rect x="914.00" y="95.30" width="16.20" height="355.50" fill="#f0f0f0" />
<rect x="915.40" y="111.80" width="13.40" height="231.50" fill="#cdcdcd" />
<path d="M918.6,106.6 l3.3,-3.3 l3.3,3.3" fill="none" stroke="#404040" stroke-width="1.5"/>
<path d="M918.4,440.6 l3.3,3.3 l3.3,-3.3" fill="none" stroke="#404040" stroke-width="1.5"/>
<rect x="701.60" y="96.00" width="212.40" height="22.20" fill="#ebebeb" />
<text x="710.40" y="111.00" font-size="10.9" fill="#2a2a2a" text-anchor="start" >基本</text>
<polygon points="711.40,122.40 713.05,126.82 717.77,127.03 714.08,129.97 715.34,134.52 711.40,131.91 707.46,134.52 708.72,129.97 705.03,127.03 709.75,126.82" fill="#dc5430" />
<text x="723.40" y="133.10" font-size="10.9" fill="#2a2a2a" text-anchor="start" >百叶窗</text>
<polygon points="792.60,122.40 794.25,126.82 798.97,127.03 795.28,129.97 796.54,134.52 792.60,131.91 788.66,134.52 789.92,129.97 786.23,127.03 790.95,126.82" fill="#dc5430" />
<text x="804.80" y="133.10" font-size="10.9" fill="#2a2a2a" text-anchor="start" >擦除</text>
<polygon points="711.40,141.42 713.05,145.84 717.77,146.05 714.08,148.99 715.34,153.54 711.40,150.93 707.46,153.54 708.72,148.99 705.03,146.05 709.75,145.84" fill="#dc5430" />
<text x="723.40" y="152.12" font-size="10.9" fill="#2a2a2a" text-anchor="start" >飞出</text>
<polygon points="792.60,141.42 794.25,145.84 798.97,146.05 795.28,148.99 796.54,153.54 792.60,150.93 788.66,153.54 789.92,148.99 786.23,146.05 790.95,145.84" fill="#dc5430" />
<text x="804.80" y="152.12" font-size="10.9" fill="#2a2a2a" text-anchor="start" >盒状</text>
<rect x="702.40" y="157.64" width="80.00" height="19.00" fill="#c6c6c6" />
<rect x="702.9" y="158.14" width="79" height="18" fill="none" stroke="#555" stroke-width="0.6" stroke-dasharray="1,1"/>
<polygon points="711.40,160.44 713.05,164.86 717.77,165.07 714.08,168.01 715.34,172.56 711.40,169.95 707.46,172.56 708.72,168.01 705.03,165.07 709.75,164.86" fill="#dc5430" />
<text x="723.40" y="171.14" font-size="10.9" fill="#2a2a2a" text-anchor="start" >阶梯状</text>
<polygon points="792.60,160.44 794.25,164.86 798.97,165.07 795.28,168.01 796.54,172.56 792.60,169.95 788.66,172.56 789.92,168.01 786.23,165.07 790.95,164.86" fill="#dc5430" />
<text x="804.80" y="171.14" font-size="10.9" fill="#2a2a2a" text-anchor="start" >菱形</text>
<polygon points="711.40,179.46 713.05,183.88 717.77,184.09 714.08,187.03 715.34,191.58 711.40,188.97 707.46,191.58 708.72,187.03 705.03,184.09 709.75,183.88" fill="#dc5430" />
<text x="723.40" y="190.16" font-size="10.9" fill="#2a2a2a" text-anchor="start" >轮子</text>
<polygon points="792.60,179.46 794.25,183.88 798.97,184.09 795.28,187.03 796.54,191.58 792.60,188.97 788.66,191.58 789.92,187.03 786.23,184.09 790.95,183.88" fill="#dc5430" />
<text x="804.80" y="190.16" font-size="10.9" fill="#2a2a2a" text-anchor="start" >劈裂</text>
<polygon points="711.40,198.48 713.05,202.90 717.77,203.11 714.08,206.05 715.34,210.60 711.40,207.99 707.46,210.60 708.72,206.05 705.03,203.11 709.75,202.90" fill="#dc5430" />
<text x="723.40" y="209.18" font-size="10.9" fill="#2a2a2a" text-anchor="start" >棋盘</text>
<polygon points="792.60,198.48 794.25,202.90 798.97,203.11 795.28,206.05 796.54,210.60 792.60,207.99 788.66,210.60 789.92,206.05 786.23,203.11 790.95,202.90" fill="#dc5430" />
<text x="804.80" y="209.18" font-size="10.9" fill="#2a2a2a" text-anchor="start" >切出</text>
<polygon points="711.40,217.50 713.05,221.92 717.77,222.13 714.08,225.07 715.34,229.62 711.40,227.01 707.46,229.62 708.72,225.07 705.03,222.13 709.75,221.92" fill="#dc5430" />
<text x="723.40" y="228.20" font-size="10.9" fill="#2a2a2a" text-anchor="start" >十字形扩展</text>
<polygon points="792.60,217.50 794.25,221.92 798.97,222.13 795.28,225.07 796.54,229.62 792.60,227.01 788.66,229.62 789.92,225.07 786.23,222.13 790.95,221.92" fill="#dc5430" />
<text x="804.80" y="228.20" font-size="10.9" fill="#2a2a2a" text-anchor="start" >随机线条</text>
<polygon points="711.40,236.52 713.05,240.94 717.77,241.15 714.08,244.09 715.34,248.64 711.40,246.03 707.46,248.64 708.72,244.09 705.03,241.15 709.75,240.94" fill="#dc5430" />
<text x="723.40" y="247.22" font-size="10.9" fill="#2a2a2a" text-anchor="start" >向外溶解</text>
<polygon points="792.60,236.52 794.25,240.94 798.97,241.15 795.28,244.09 796.54,248.64 792.60,246.03 788.66,248.64 789.92,244.09 786.23,241.15 790.95,240.94" fill="#dc5430" />
<text x="804.80" y="247.22" font-size="10.9" fill="#2a2a2a" text-anchor="start" >消失</text>
<polygon points="711.40,255.54 713.05,259.96 717.77,260.17 714.08,263.11 715.34,267.66 711.40,265.05 707.46,267.66 708.72,263.11 705.03,260.17 709.75,259.96" fill="#dc5430" />
<text x="723.40" y="266.24" font-size="10.9" fill="#2a2a2a" text-anchor="start" >楔入</text>
<polygon points="792.60,255.54 794.25,259.96 798.97,260.17 795.28,263.11 796.54,267.66 792.60,265.05 788.66,267.66 789.92,263.11 786.23,260.17 790.95,259.96" fill="#dc5430" />
<text x="804.80" y="266.24" font-size="10.9" fill="#2a2a2a" text-anchor="start" >圆形扩展</text>
<rect x="701.60" y="272.50" width="212.40" height="20.50" fill="#ebebeb" />
<text x="710.40" y="286.65" font-size="10.9" fill="#2a2a2a" text-anchor="start" >细微</text>
<polygon points="711.40,296.40 713.05,300.82 717.77,301.03 714.08,303.97 715.34,308.52 711.40,305.91 707.46,308.52 708.72,303.97 705.03,301.03 709.75,300.82" fill="#dc5430" />
<text x="723.40" y="307.10" font-size="10.9" fill="#2a2a2a" text-anchor="start" >淡出</text>
<polygon points="792.60,296.40 794.25,300.82 798.97,301.03 795.28,303.97 796.54,308.52 792.60,305.91 788.66,308.52 789.92,303.97 786.23,301.03 790.95,300.82" fill="#dc5430" />
<text x="804.80" y="307.10" font-size="10.9" fill="#2a2a2a" text-anchor="start" >收缩</text>
<polygon points="711.40,315.60 713.05,320.02 717.77,320.23 714.08,323.17 715.34,327.72 711.40,325.11 707.46,327.72 708.72,323.17 705.03,320.23 709.75,320.02" fill="#dc5430" />
<text x="723.40" y="326.30" font-size="10.9" fill="#2a2a2a" text-anchor="start" >缩放</text>
<polygon points="792.60,315.60 794.25,320.02 798.97,320.23 795.28,323.17 796.54,327.72 792.60,325.11 788.66,327.72 789.92,323.17 786.23,320.23 790.95,320.02" fill="#dc5430" />
<text x="804.80" y="326.30" font-size="10.9" fill="#2a2a2a" text-anchor="start" >旋转</text>
<rect x="701.60" y="332.40" width="212.40" height="20.80" fill="#ebebeb" />
<text x="710.40" y="346.70" font-size="10.9" fill="#2a2a2a" text-anchor="start" >温和</text>
<polygon points="711.40,357.40 713.05,361.82 717.77,362.03 714.08,364.97 715.34,369.52 711.40,366.91 707.46,369.52 708.72,364.97 705.03,362.03 709.75,361.82" fill="#dc5430" />
<text x="723.40" y="368.10" font-size="10.9" fill="#2a2a2a" text-anchor="start" >层叠</text>
<polygon points="792.60,357.40 794.25,361.82 798.97,362.03 795.28,364.97 796.54,369.52 792.60,366.91 788.66,369.52 789.92,364.97 786.23,362.03 790.95,361.82" fill="#dc5430" />
<text x="804.80" y="368.10" font-size="10.9" fill="#2a2a2a" text-anchor="start" >回旋</text>
<polygon points="711.40,376.50 713.05,380.92 717.77,381.13 714.08,384.07 715.34,388.62 711.40,386.01 707.46,388.62 708.72,384.07 705.03,381.13 709.75,380.92" fill="#dc5430" />
<text x="723.40" y="387.20" font-size="10.9" fill="#2a2a2a" text-anchor="start" >基本缩放</text>
<polygon points="792.60,376.50 794.25,380.92 798.97,381.13 795.28,384.07 796.54,388.62 792.60,386.01 788.66,388.62 789.92,384.07 786.23,381.13 790.95,380.92" fill="#dc5430" />
<text x="804.80" y="387.20" font-size="10.9" fill="#2a2a2a" text-anchor="start" >上浮</text>
<polygon points="711.40,395.60 713.05,400.02 717.77,400.23 714.08,403.17 715.34,407.72 711.40,405.11 707.46,407.72 708.72,403.17 705.03,400.23 709.75,400.02" fill="#dc5430" />
<text x="723.40" y="406.30" font-size="10.9" fill="#2a2a2a" text-anchor="start" >伸缩</text>
<polygon points="792.60,395.60 794.25,400.02 798.97,400.23 795.28,403.17 796.54,407.72 792.60,405.11 788.66,407.72 789.92,403.17 786.23,400.23 790.95,400.02" fill="#dc5430" />
<text x="804.80" y="406.30" font-size="10.9" fill="#2a2a2a" text-anchor="start" >收缩并旋转</text>
<polygon points="711.40,414.70 713.05,419.12 717.77,419.33 714.08,422.27 715.34,426.82 711.40,424.21 707.46,426.82 708.72,422.27 705.03,419.33 709.75,419.12" fill="#dc5430" />
<text x="723.40" y="425.40" font-size="10.9" fill="#2a2a2a" text-anchor="start" >下沉</text>
<polygon points="792.60,414.70 794.25,419.12 798.97,419.33 795.28,422.27 796.54,426.82 792.60,424.21 788.66,426.82 789.92,422.27 786.23,419.33 790.95,419.12" fill="#dc5430" />
<text x="804.80" y="425.40" font-size="10.9" fill="#2a2a2a" text-anchor="start" >下浮</text>
<polygon points="711.40,433.80 713.05,438.22 717.77,438.43 714.08,441.37 715.34,445.92 711.40,443.31 707.46,445.92 708.72,441.37 705.03,438.43 709.75,438.22" fill="#dc5430" />
<text x="723.40" y="444.50" font-size="10.9" fill="#2a2a2a" text-anchor="start" >中心旋转</text>
<rect x="702.0" y="154.9" width="81.4" height="21.2" fill="none" stroke="#e8262c" stroke-width="1.9"/>
<rect x="701.3" y="458.9" width="10.2" height="10.2" fill="#ffffff" stroke="#333" stroke-width="0.9"/>
<path d="M703.4,464 l2.4,2.6 l4.2,-5.2" fill="none" stroke="#222" stroke-width="1.25"/>
<text x="718.8" y="468.2" font-size="10.9" fill="#000">预览效果(<tspan text-decoration="underline">P</tspan>)</text>
<rect x="788.2" y="457.2" width="65.4" height="20.4" fill="#e1e1e1" stroke="#0078d7" stroke-width="1.7"/>
<text x="820.80" y="471.60" font-size="10.9" fill="#000" text-anchor="middle" >确定</text>
<rect x="864.2" y="456.8" width="65.8" height="21" fill="#e1e1e1" stroke="#adadad" stroke-width="1"/>
<text x="897.20" y="471.60" font-size="10.9" fill="#000" text-anchor="middle" >取消</text>
</svg>
</body>
</html>
